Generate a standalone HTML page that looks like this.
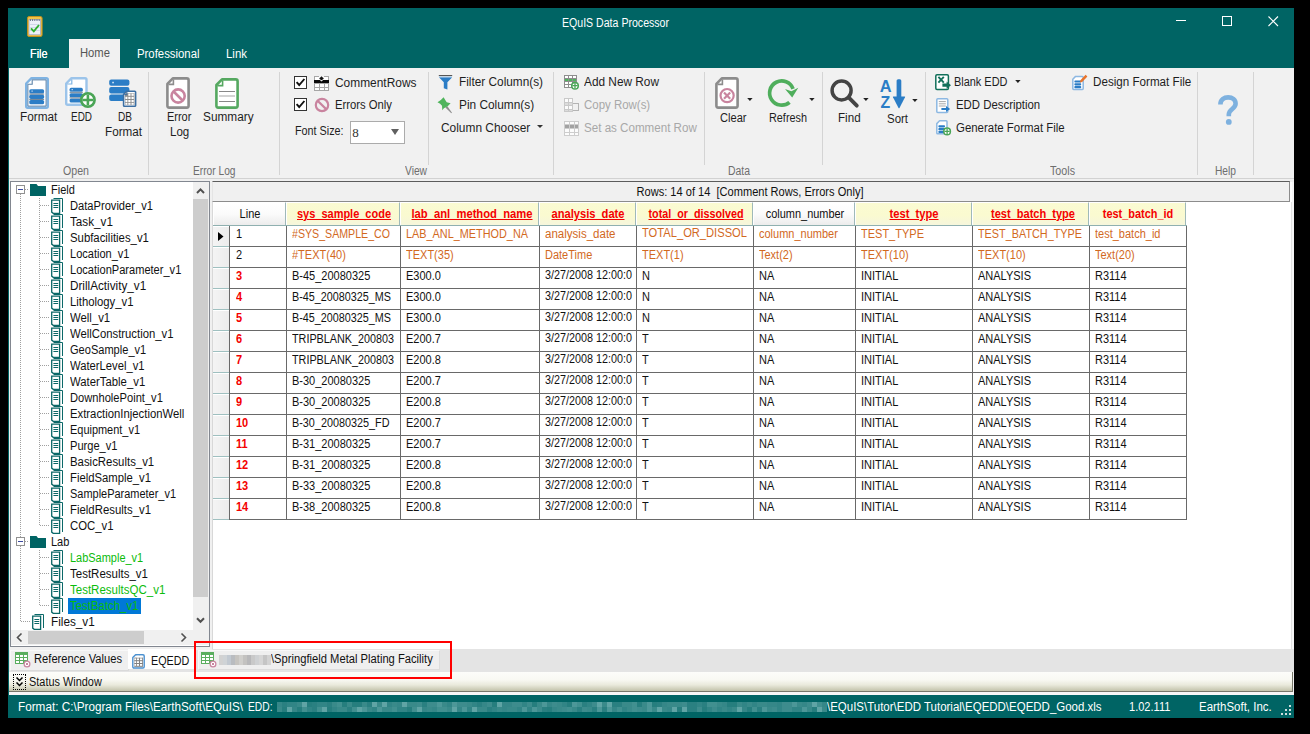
<!DOCTYPE html><html><head><meta charset="utf-8"><title>EQuIS Data Processor</title><style>
html,body{margin:0;padding:0;background:#000;}
body{width:1310px;height:734px;position:relative;overflow:hidden;font-family:"Liberation Sans",sans-serif;}
.a{position:absolute;}
.t{position:absolute;white-space:pre;line-height:1;font-family:"Liberation Sans",sans-serif;}
svg{position:absolute;overflow:visible;}
.vs{position:absolute;width:1px;background:#d4d4d4;}
.gl{position:absolute;background:#696969;}
.rh{position:absolute;left:213px;width:16px;height:20px;background:linear-gradient(90deg,#f4f4f4,#ececec);border-top:1px solid #fff;box-sizing:border-box;}

</style></head><body>
<div class="a" style="left:8px;top:8px;width:1286px;height:710px;background:#006464;"></div>
<div class="a" style="left:9px;top:68px;width:1285px;height:110px;background:#f1f1f1;"></div>
<div class="a" style="left:9px;top:178px;width:1285px;height:1px;background:#d2d2d2;"></div>
<div class="a" style="left:9px;top:179px;width:1285px;height:516px;background:#f0f0f0;"></div>
<div class="a" style="left:69px;top:39px;width:51px;height:29px;background:#f1f1f1;"></div>
<span class="t" style="left:562px;top:17.18px;font-size:12px;color:#ffffff;transform:scaleX(0.8815);transform-origin:0 50%;">EQuIS Data Processor</span>
<svg style="left:1170px;top:10px" width="120" height="24" viewBox="0 0 120 24"><g stroke="#fff" stroke-width="1" fill="none" shape-rendering="crispEdges"><path d="M6 10.5h10"/><rect x="52.5" y="6.5" width="9" height="9"/></g><path d="M98.5 6.5l9.5 9.5M108 6.5l-9.5 9.5" stroke="#fff" stroke-width="1.1" fill="none"/></svg>
<svg style="left:27.3px;top:15.8px" width="16" height="22" viewBox="0 0 16 22"><rect x="0.5" y="0.5" width="14.6" height="20" rx="1.6" fill="#f0c348" stroke="#c08f1e"/><rect x="2" y="3.6" width="11.6" height="15.2" fill="#edf0f8" stroke="#8e9bc0" stroke-width="0.6"/><path d="M3.4 3.2V5M5.6 3.2V5M7.8 3.2V5M10 3.2V5M12.2 3.2V5" stroke="#55607a" stroke-width="0.9"/><path d="M3 8.5h9.6M3 11.5h9.6M3 14.5h9.6" stroke="#c9d0e6" stroke-width="0.8"/><path d="M4 12.4l2.8 3 5.2-6.4" stroke="#2fb02f" stroke-width="1.9" fill="none"/></svg>
<span class="t" style="left:29.5px;top:47.68px;font-size:12px;color:#ffffff;transform:scaleX(0.9047);transform-origin:0 50%;text-shadow:0 0 0.4px #fff;">File</span>
<span class="t" style="left:80px;top:47.28px;font-size:12px;color:#555555;transform:scaleX(0.9370);transform-origin:0 50%;">Home</span>
<span class="t" style="left:136.5px;top:47.68px;font-size:12px;color:#ffffff;transform:scaleX(0.9463);transform-origin:0 50%;">Professional</span>
<span class="t" style="left:225.5px;top:47.68px;font-size:12px;color:#ffffff;transform:scaleX(0.9539);transform-origin:0 50%;">Link</span>
<div class="vs" style="left:428px;top:72px;height:93px;"></div>
<div class="vs" style="left:704px;top:72px;height:93px;"></div>
<div class="vs" style="left:822px;top:72px;height:93px;"></div>
<div class="vs" style="left:148px;top:72px;height:103px;"></div>
<div class="vs" style="left:279px;top:72px;height:103px;"></div>
<div class="vs" style="left:553px;top:72px;height:103px;"></div>
<div class="vs" style="left:925px;top:72px;height:103px;"></div>
<div class="vs" style="left:1197px;top:72px;height:103px;"></div>
<div class="vs" style="left:1253px;top:72px;height:103px;"></div>
<span class="t" style="left:63px;top:165.18px;font-size:12px;color:#6e6e6e;transform:scaleX(0.8856);transform-origin:0 50%;">Open</span>
<span class="t" style="left:193px;top:165.18px;font-size:12px;color:#6e6e6e;transform:scaleX(0.8495);transform-origin:0 50%;">Error Log</span>
<span class="t" style="left:404.9px;top:165.18px;font-size:12px;color:#6e6e6e;transform:scaleX(0.8528);transform-origin:0 50%;">View</span>
<span class="t" style="left:728.4px;top:165.18px;font-size:12px;color:#6e6e6e;transform:scaleX(0.8675);transform-origin:0 50%;">Data</span>
<span class="t" style="left:1049.7px;top:165.18px;font-size:12px;color:#6e6e6e;transform:scaleX(0.8924);transform-origin:0 50%;">Tools</span>
<span class="t" style="left:1215px;top:165.18px;font-size:12px;color:#6e6e6e;transform:scaleX(0.8506);transform-origin:0 50%;">Help</span>
<svg style="left:25px;top:77px" width="24" height="32" viewBox="0 0 24 32">
<path d="M6.5 1.2H21.3Q22.8 1.2 22.8 2.7V29.3Q22.8 30.8 21.3 30.8H2.7Q1.2 30.8 1.2 29.3V6.5Z" fill="#fff" stroke="#7fb3e2" stroke-width="2.4" stroke-linejoin="round"/>
<path d="M7.2 2.6V7.2H2.6" fill="none" stroke="#5c82a8" stroke-width="1.1"/>
<path d="M2.9 7.4V29.1H21.1V2.9H7.4" fill="none" stroke="#5c82a8" stroke-width="1"/>
<rect x="4.3" y="12.2" width="14.8" height="4.3" rx="1.6" fill="#2b7dc6"/><rect x="4.3" y="17.6" width="14.8" height="4.3" rx="1.6" fill="#2b7dc6"/><rect x="4.3" y="23" width="14.8" height="4.3" rx="1.6" fill="#2b7dc6"/>
<rect x="4.3" y="16.5" width="14.8" height="1.1" fill="#7a8a9a"/><rect x="4.3" y="21.9" width="14.8" height="1.1" fill="#7a8a9a"/>
<rect x="6.5" y="13.5" width="1.2" height="1.2" fill="#cfe3f5"/>
</svg>
<span class="t" style="left:20.3px;top:110.78px;font-size:12px;color:#1e1e1e;transform:scaleX(0.9838);transform-origin:0 50%;">Format</span>
<svg style="left:65px;top:77px" width="32" height="32" viewBox="0 0 32 32">
<path d="M6.5 1.2H20Q21.5 1.2 21.5 2.7V26.2Q21.5 27.7 20 27.7H2.7Q1.2 27.7 1.2 26.2V6.5Z" fill="#fff" stroke="#9cc4ea" stroke-width="2.4" stroke-linejoin="round"/>
<path d="M6.8 2.5V7H2.3" fill="none" stroke="#7fb3e2" stroke-width="1.2"/>
<rect x="4.6" y="10.8" width="13.2" height="4" rx="1.5" fill="#2b7dc6"/><rect x="4.6" y="16.2" width="13.2" height="4" rx="1.5" fill="#2b7dc6"/><rect x="4.6" y="21.5" width="13.2" height="4" rx="1.5" fill="#2b7dc6"/>
<rect x="4.6" y="14.8" width="13.2" height="1.4" fill="#8a99a8"/><rect x="4.6" y="20.2" width="13.2" height="1.3" fill="#8a99a8"/>
<rect x="6.6" y="12" width="1.2" height="1.2" fill="#cfe3f5"/>
<circle cx="22.9" cy="23" r="6.7" fill="#fff" stroke="#4aa556" stroke-width="2.6"/>
<path d="M22.9 17.5V28.5M17.4 23H28.4" stroke="#4aa556" stroke-width="2.6"/>
</svg>
<span class="t" style="left:71.2px;top:110.78px;font-size:12px;color:#1e1e1e;transform:scaleX(0.8286);transform-origin:0 50%;">EDD</span>
<svg style="left:109px;top:79px" width="28" height="29" viewBox="0 0 28 29">
<rect x="0.2" y="0.4" width="20.2" height="6.4" rx="2" fill="#2b7dc6"/><rect x="0.2" y="8" width="20.2" height="6.4" rx="2" fill="#2b7dc6"/><rect x="0.2" y="15.6" width="20.2" height="6.4" rx="2" fill="#2b7dc6"/>
<rect x="3.3" y="2.8" width="1.5" height="1.5" fill="#e4f0fb"/>
<path d="M17.8 12.2H25.8Q26.6 12.2 26.6 13V26.5Q26.6 27.3 25.8 27.3H15.4Q14.6 27.3 14.6 26.5V15.4Z" fill="#fff" stroke="#3c6fa3" stroke-width="1.6" stroke-linejoin="round"/>
<rect x="16" y="14.2" width="9.4" height="11.8" fill="#8f8f8f"/>
<g fill="#fff"><rect x="19.3" y="14.6" width="2.2" height="2.2"/><rect x="22.5" y="14.6" width="2.2" height="2.2"/><rect x="16.4" y="17.8" width="2" height="2.2"/><rect x="19.3" y="17.8" width="2.2" height="2.2"/><rect x="22.5" y="17.8" width="2.2" height="2.2"/><rect x="16.4" y="21" width="2" height="2.2"/><rect x="19.3" y="21" width="2.2" height="2.2"/><rect x="22.5" y="21" width="2.2" height="2.2"/><rect x="16.4" y="24" width="2" height="1.8"/><rect x="19.3" y="24" width="2.2" height="1.8"/><rect x="22.5" y="24" width="2.2" height="1.8"/></g>
<path d="M17.9 13V15.6H15.3" fill="none" stroke="#3c6fa3" stroke-width="1"/>
</svg>
<span class="t" style="left:117.5px;top:110.78px;font-size:12px;color:#1e1e1e;transform:scaleX(0.8397);transform-origin:0 50%;">DB</span>
<span class="t" style="left:104.9px;top:125.58px;font-size:12px;color:#1e1e1e;transform:scaleX(0.9733);transform-origin:0 50%;">Format</span>
<svg style="left:166px;top:77px" width="24" height="32" viewBox="0 0 24 32">
<path d="M6.8 1.4H20.8Q22.6 1.4 22.6 3.2V28.8Q22.6 30.6 20.8 30.6H3.2Q1.4 30.6 1.4 28.8V6.8Z" fill="#fff" stroke="#8c8c8c" stroke-width="2.6" stroke-linejoin="round"/>
<path d="M7.4 2.5V7.4H2.5" fill="none" stroke="#8c8c8c" stroke-width="1.6"/>
<circle cx="12.1" cy="19" r="6.6" fill="#fff" stroke="#c9849f" stroke-width="2.6"/>
<path d="M7.6 14.5L16.6 23.5" stroke="#c9849f" stroke-width="2.6"/>
</svg>
<span class="t" style="left:166.5px;top:110.78px;font-size:12px;color:#1e1e1e;transform:scaleX(0.9111);transform-origin:0 50%;">Error</span>
<span class="t" style="left:170.4px;top:125.58px;font-size:12px;color:#1e1e1e;transform:scaleX(0.9635);transform-origin:0 50%;">Log</span>
<svg style="left:215px;top:78px" width="24" height="31" viewBox="0 0 24 31">
<path d="M7 1.4H20.8Q22.6 1.4 22.6 3.2V27.8Q22.6 29.6 20.8 29.6H3.2Q1.4 29.6 1.4 27.8V7Z" fill="#fff" stroke="#55a860" stroke-width="2.6" stroke-linejoin="round"/>
<path d="M7.6 2.5V7.6H2.5" fill="none" stroke="#55a860" stroke-width="1.6"/>
<path d="M4 13.5H20" stroke="#7a7a7a" stroke-width="0.9"/><path d="M4 18H20" stroke="#c8c8c8" stroke-width="1.6"/><path d="M4 23.5H20" stroke="#7a7a7a" stroke-width="0.9"/>
</svg>
<span class="t" style="left:203.1px;top:110.78px;font-size:12px;color:#1e1e1e;transform:scaleX(0.9855);transform-origin:0 50%;">Summary</span>
<div class="a" style="left:294px;top:76px;width:11px;height:11px;border:1px solid #333;background:#fff;"></div>
<svg style="left:294px;top:76px" width="13" height="13" viewBox="0 0 13 13"><path d="M2.6 6.2L5.2 9L10.4 3" fill="none" stroke="#111" stroke-width="1.9"/></svg>
<div class="a" style="left:294px;top:98px;width:11px;height:11px;border:1px solid #333;background:#fff;"></div>
<svg style="left:294px;top:98px" width="13" height="13" viewBox="0 0 13 13"><path d="M2.6 6.2L5.2 9L10.4 3" fill="none" stroke="#111" stroke-width="1.9"/></svg>
<svg style="left:314px;top:76px" width="15" height="15" viewBox="0 0 15 15"><g shape-rendering="crispEdges"><rect x="0" y="0" width="15" height="15" fill="#a6a6a6"/>
<rect x="1" y="1" width="4" height="3" fill="#fff"/><rect x="10" y="1" width="4" height="3" fill="#fff"/><rect x="5" y="0" width="5" height="4" fill="#f6f6f6"/>
<rect x="0" y="4" width="15" height="3" fill="#0a0a0a"/>
<rect x="1" y="8" width="4" height="3" fill="#fff"/><rect x="6" y="8" width="4" height="3" fill="#fff"/><rect x="11" y="8" width="3" height="3" fill="#fff"/>
<rect x="1" y="12" width="4" height="2" fill="#fff"/><rect x="6" y="12" width="4" height="2" fill="#fff"/><rect x="11" y="12" width="3" height="2" fill="#fff"/></g>
<path d="M7.5 0.2L9.8 2.4L7.5 4.6L5.2 2.4Z" fill="#111"/><path d="M5.8 4L7.5 5.6L9.2 4Z" fill="#e8e8e8"/></svg>
<span class="t" style="left:334.5px;top:77.18px;font-size:12px;color:#1e1e1e;transform:scaleX(0.9935);transform-origin:0 50%;">CommentRows</span>
<svg style="left:313.5px;top:97.3px" width="16" height="16" viewBox="0 0 16 16"><circle cx="8" cy="8" r="6.2" fill="none" stroke="#c9849f" stroke-width="2.2"/><path d="M3.6 3.8L12.4 12.4" stroke="#c9849f" stroke-width="2.2"/></svg>
<span class="t" style="left:334.5px;top:99.18px;font-size:12px;color:#1e1e1e;transform:scaleX(0.9392);transform-origin:0 50%;">Errors Only</span>
<span class="t" style="left:295.4px;top:125.18px;font-size:12px;color:#1e1e1e;transform:scaleX(0.8995);transform-origin:0 50%;">Font Size:</span>
<div class="a" style="left:350px;top:121px;width:53px;height:21px;border:1px solid #ababab;background:#fff;"></div>
<span class="t" style="left:352.3px;top:126.18px;font-size:12px;color:#333;font-family:'Liberation Serif',serif;font-size:13px;">8</span>
<svg style="left:390px;top:128px" width="10" height="8" viewBox="0 0 10 8"><path d="M1 1H9L5 7Z" fill="#606060"/></svg>
<svg style="left:438px;top:74px" width="15" height="16" viewBox="0 0 15 16"><rect x="0.8" y="1" width="13.4" height="1.1" fill="#555"/><rect x="1" y="2.6" width="13" height="1" fill="#9cc6ea"/><path d="M1.2 3.5H14L9.4 8.3V15.5L5.8 14.2V8.3Z" fill="#2b7dc6"/></svg>
<span class="t" style="left:458.5px;top:76.28px;font-size:12px;color:#1e1e1e;transform:scaleX(0.9843);transform-origin:0 50%;">Filter Column(s)</span>
<svg style="left:437px;top:97px" width="17" height="17" viewBox="0 0 17 17"><path d="M8.4 10.6L10.4 9.2L15 15.8L14.3 16.2Z" fill="#8e8e8e"/><path d="M6.6 0.2L8.1 2.7L9.7 5.2L13.6 6.2L10.7 9.3L6.9 11.2L5.3 13.2L5 8.7L3.1 6.8L0.5 5.2L3.8 3Z" fill="#4fb45c"/></svg>
<span class="t" style="left:458.5px;top:99.18px;font-size:12px;color:#1e1e1e;transform:scaleX(0.9891);transform-origin:0 50%;">Pin Column(s)</span>
<span class="t" style="left:440.7px;top:121.78px;font-size:12px;color:#1e1e1e;transform:scaleX(0.9917);transform-origin:0 50%;">Column Chooser</span>
<svg style="left:536.8px;top:125px" width="6" height="3" viewBox="0 0 6 3"><path d="M0 0H6L3 3Z" fill="#333"/></svg>
<svg style="left:564px;top:75px" width="19" height="17" viewBox="0 0 19 17"><g shape-rendering="crispEdges"><rect x="0" y="0" width="13" height="13" fill="#8e8e8e"/><rect x="1" y="1" width="3" height="2" fill="#fff"/><rect x="5" y="1" width="3" height="2" fill="#fff"/><rect x="9" y="1" width="3" height="2" fill="#fff"/><rect x="1" y="4" width="3" height="2" fill="#4fb45c"/><rect x="5" y="4" width="3" height="2" fill="#4fb45c"/><rect x="9" y="4" width="3" height="2" fill="#4fb45c"/><rect x="1" y="7" width="3" height="2" fill="#fff"/><rect x="5" y="7" width="3" height="2" fill="#fff"/><rect x="9" y="7" width="3" height="2" fill="#fff"/><rect x="1" y="10" width="3" height="2" fill="#fff"/><rect x="5" y="10" width="3" height="2" fill="#fff"/><rect x="9" y="10" width="3" height="2" fill="#fff"/></g><circle cx="11" cy="10.7" r="3.3" fill="#fff" stroke="#4aa556" stroke-width="1.5"/><path d="M11 8V13.4M8.3 10.7H13.7" stroke="#4aa556" stroke-width="1.3"/></svg>
<span class="t" style="left:584.2px;top:76.28px;font-size:12px;color:#1e1e1e;transform:scaleX(0.9864);transform-origin:0 50%;">Add New Row</span>
<svg style="left:564px;top:98px" width="15" height="18" viewBox="0 0 15 18"><g shape-rendering="crispEdges"><rect x="0" y="0" width="9" height="14" fill="#c9c9c9"/><rect x="1" y="1" width="3" height="3" fill="#fcfcfc"/><rect x="5" y="1" width="3" height="3" fill="#fcfcfc"/><rect x="1" y="5" width="3" height="2" fill="#dcdcdc"/><rect x="5" y="5" width="3" height="2" fill="#dcdcdc"/><rect x="1" y="8" width="3" height="3" fill="#fcfcfc"/><rect x="5" y="8" width="3" height="3" fill="#fcfcfc"/><rect x="1" y="12" width="3" height="1" fill="#dcdcdc"/><rect x="5" y="12" width="3" height="1" fill="#dcdcdc"/></g><path d="M9 5.5H14.5V12.5H9" fill="none" stroke="#b4b4b4" stroke-width="1" shape-rendering="crispEdges"/></svg>
<span class="t" style="left:584.2px;top:99.18px;font-size:12px;color:#a8a8a8;transform:scaleX(0.9544);transform-origin:0 50%;">Copy Row(s)</span>
<svg style="left:564px;top:121px" width="21" height="19" viewBox="0 0 21 19"><g shape-rendering="crispEdges"><rect x="0" y="0" width="15" height="15" fill="#cdcdcd"/><rect x="1" y="1" width="4" height="2" fill="#fcfcfc"/><rect x="6" y="1" width="4" height="2" fill="#fcfcfc"/><rect x="11" y="1" width="3" height="2" fill="#fcfcfc"/><rect x="1" y="4" width="4" height="3" fill="#a2a2a2"/><rect x="6" y="4" width="4" height="3" fill="#a2a2a2"/><rect x="11" y="4" width="3" height="3" fill="#a2a2a2"/><rect x="1" y="8" width="4" height="3" fill="#fcfcfc"/><rect x="6" y="8" width="4" height="3" fill="#fcfcfc"/><rect x="11" y="8" width="3" height="3" fill="#fcfcfc"/><rect x="1" y="12" width="4" height="2" fill="#fcfcfc"/><rect x="6" y="12" width="4" height="2" fill="#fcfcfc"/><rect x="11" y="12" width="3" height="2" fill="#fcfcfc"/></g></svg>
<span class="t" style="left:584.2px;top:121.78px;font-size:12px;color:#a8a8a8;transform:scaleX(0.9664);transform-origin:0 50%;">Set as Comment Row</span>
<svg style="left:715px;top:77px" width="24" height="32" viewBox="0 0 24 32">
<path d="M6.8 1.4H20.8Q22.6 1.4 22.6 3.2V28.8Q22.6 30.6 20.8 30.6H3.2Q1.4 30.6 1.4 28.8V6.8Z" fill="#fff" stroke="#8c8c8c" stroke-width="2.6" stroke-linejoin="round"/>
<path d="M7.4 2.5V7.4H2.5" fill="none" stroke="#8c8c8c" stroke-width="1.6"/>
<circle cx="12.1" cy="18.6" r="6.6" fill="#fff" stroke="#c9849f" stroke-width="2.2"/>
<path d="M9 15.5L15.2 21.7M15.2 15.5L9 21.7" stroke="#c9849f" stroke-width="2.2"/>
</svg>
<svg style="left:746.8px;top:98px" width="6" height="3" viewBox="0 0 6 3"><path d="M0.2 0H5.6L2.9 3Z" fill="#222"/></svg>
<span class="t" style="left:719.5px;top:112.18px;font-size:12px;color:#1e1e1e;transform:scaleX(0.9237);transform-origin:0 50%;">Clear</span>
<svg style="left:767px;top:78px" width="32" height="30" viewBox="0 0 32 30">
<path d="M26.07 10.86A12.1 12.1 0 1 0 22.5 24.3" fill="none" stroke="#4fae5c" stroke-width="3.7"/>
<path d="M18 11L24.4 13.2L31.3 9.8L25.2 19.4Z" fill="#4fae5c"/>
</svg>
<svg style="left:808.8px;top:98px" width="6" height="3" viewBox="0 0 6 3"><path d="M0.2 0H5.6L2.9 3Z" fill="#222"/></svg>
<span class="t" style="left:768.6px;top:112.18px;font-size:12px;color:#1e1e1e;transform:scaleX(0.9041);transform-origin:0 50%;">Refresh</span>
<svg style="left:829px;top:78px" width="31" height="31" viewBox="0 0 31 31">
<circle cx="12.6" cy="12.4" r="9.5" fill="none" stroke="#444" stroke-width="3.5"/><path d="M19.6 19.4L27.8 27.7" stroke="#444" stroke-width="3.8" stroke-linecap="round"/>
</svg>
<svg style="left:862.8px;top:98px" width="6" height="3" viewBox="0 0 6 3"><path d="M0.2 0H5.6L2.9 3Z" fill="#222"/></svg>
<span class="t" style="left:838px;top:112.18px;font-size:12px;color:#1e1e1e;transform:scaleX(0.9681);transform-origin:0 50%;">Find</span>
<svg style="left:879px;top:79px" width="27" height="30" viewBox="0 0 27 30">
<text x="0.8" y="12.7" font-family="Liberation Sans" font-weight="bold" font-size="16.4" fill="#2b7dc6">A</text>
<text x="1.6" y="28.8" font-family="Liberation Sans" font-weight="bold" font-size="15.8" fill="#2b7dc6">Z</text>
<rect x="17.6" y="0.3" width="4.7" height="20" rx="1.5" fill="#2b7dc6"/><path d="M14.4 17.4H25.6Q26.4 17.4 26 18.2L20.6 28.8Q20 29.8 19.4 28.8L14 18.2Q13.6 17.4 14.4 17.4Z" fill="#2b7dc6"/>
</svg>
<svg style="left:911.9px;top:98.6px" width="6" height="3" viewBox="0 0 6 3"><path d="M0.2 0H5.6L2.9 3Z" fill="#222"/></svg>
<span class="t" style="left:886.9px;top:112.78px;font-size:12px;color:#1e1e1e;transform:scaleX(0.9539);transform-origin:0 50%;">Sort</span>
<svg style="left:935px;top:74px" width="16" height="17" viewBox="0 0 16 17">
<rect x="0.8" y="0.8" width="12.6" height="14.6" rx="1.2" fill="#fff" stroke="#12705a" stroke-width="1.5"/>
<path d="M3.4 2.8L8.8 8.6M8.8 2.8L3.4 8.6" stroke="#12705a" stroke-width="1.9"/>
<path d="M7.4 9.6H11.6V7.6L16 11.2L11.6 14.8V12.8H7.4Z" fill="#12705a"/>
</svg>
<span class="t" style="left:954.2px;top:76.28px;font-size:12px;color:#1e1e1e;transform:scaleX(0.9099);transform-origin:0 50%;">Blank EDD</span>
<svg style="left:1014.6px;top:80px" width="6" height="3" viewBox="0 0 6 3"><path d="M0.2 0H5.6L2.9 3Z" fill="#222"/></svg>
<svg style="left:936px;top:97.8px" width="15" height="16" viewBox="0 0 15 16">
<rect x="0.8" y="0.8" width="11" height="13.6" rx="1" fill="#fff" stroke="#8db8e2" stroke-width="1.5"/>
<path d="M2.8 3.6H9.8M2.8 5.8H9.8M2.8 8H9.8" stroke="#a9a9a9" stroke-width="1"/>
<path d="M5.4 10H10V8L14.2 11L10 14V12H5.4Z" fill="#2b7dc6"/>
</svg>
<span class="t" style="left:956.3px;top:99.18px;font-size:12px;color:#1e1e1e;transform:scaleX(0.9492);transform-origin:0 50%;">EDD Description</span>
<svg style="left:936px;top:120px" width="16" height="16" viewBox="0 0 16 16">
<path d="M3.6 0.8H10.2Q11 0.8 11 1.6V13Q11 13.8 10.2 13.8H1.6Q0.8 13.8 0.8 13V3.6Z" fill="#fff" stroke="#8db8e2" stroke-width="1.5" stroke-linejoin="round"/>
<rect x="2.4" y="5.2" width="6.6" height="2.2" rx="0.8" fill="#2b7dc6"/><rect x="2.4" y="8" width="6.6" height="2.2" rx="0.8" fill="#2b7dc6"/><rect x="2.4" y="10.8" width="6.6" height="2.2" rx="0.8" fill="#2b7dc6"/>
<circle cx="11.1" cy="11.4" r="3.3" fill="#fff" stroke="#4aa556" stroke-width="1.5"/><path d="M11.1 8.8V14M8.5 11.4H13.7" stroke="#4aa556" stroke-width="1.3"/>
</svg>
<span class="t" style="left:956.3px;top:121.78px;font-size:12px;color:#1e1e1e;transform:scaleX(0.9531);transform-origin:0 50%;">Generate Format File</span>
<svg style="left:1072px;top:74px" width="16" height="17" viewBox="0 0 16 17">
<path d="M3.6 2.4H10.4Q11.2 2.4 11.2 3.2V14.6Q11.2 15.4 10.4 15.4H1.6Q0.8 15.4 0.8 14.6V5.2Z" fill="#fff" stroke="#8db8e2" stroke-width="1.5" stroke-linejoin="round"/>
<rect x="2.4" y="6.4" width="6.8" height="2.2" rx="0.8" fill="#2b7dc6"/><rect x="2.4" y="9.2" width="6.8" height="2.2" rx="0.8" fill="#2b7dc6"/><rect x="2.4" y="12" width="6.8" height="2.2" rx="0.8" fill="#2b7dc6"/>
<path d="M8.4 6.2L13.6 0.8L15.4 2.6L10.2 8L8 8.6Z" fill="#e8742c"/>
</svg>
<span class="t" style="left:1093px;top:76.28px;font-size:12px;color:#1e1e1e;transform:scaleX(0.9697);transform-origin:0 50%;">Design Format File</span>
<svg style="left:1217px;top:94px" width="22" height="32" viewBox="0 0 22 32">
<path d="M3.4 10.4C3.4 5.2 7 3.4 11.2 3.4C15.4 3.4 18.6 5.6 18.6 9.8C18.6 14.6 11.8 15.4 11.8 20.4V22.2" fill="none" stroke="#7eb1df" stroke-width="4.6"/>
<circle cx="11.8" cy="27.9" r="2.9" fill="#7eb1df"/>
</svg>
<div class="a" style="left:10px;top:181px;width:198px;height:464px;border:1px solid #828790;background:#fff;box-sizing:content-box;"></div>
<div class="a" style="left:193px;top:182px;width:16px;height:448px;background:#f0f0f0;"></div>
<div class="a" style="left:193px;top:199px;width:15px;height:398px;background:#cdcdcd;"></div>
<svg style="left:195px;top:186px" width="11" height="9" viewBox="0 0 11 9"><path d="M2 7L5.5 3.4L9 7" fill="none" stroke="#505050" stroke-width="2"/></svg>
<svg style="left:195px;top:616px" width="11" height="9" viewBox="0 0 11 9"><path d="M2 2.2L5.5 5.8L9 2.2" fill="none" stroke="#505050" stroke-width="2"/></svg>
<div class="a" style="left:11px;top:630px;width:181px;height:15px;background:#f0f0f0;"></div>
<div class="a" style="left:192px;top:630px;width:17px;height:15px;background:#f0f0f0;"></div>
<div class="a" style="left:28px;top:631px;width:116px;height:13px;background:#cdcdcd;"></div>
<svg style="left:15px;top:632px" width="8" height="11" viewBox="0 0 8 11"><path d="M6.5 1.5L2.5 5.5L6.5 9.5" fill="none" stroke="#505050" stroke-width="1.6"/></svg>
<svg style="left:180px;top:632px" width="8" height="11" viewBox="0 0 8 11"><path d="M1.5 1.5L5.5 5.5L1.5 9.5" fill="none" stroke="#505050" stroke-width="1.6"/></svg>
<div class="a" style="left:20px;top:194px;width:1px;height:428px;background:repeating-linear-gradient(180deg,#a0a0a0 0 1px,transparent 1px 2px);"></div>
<div class="a" style="left:25px;top:189px;width:4px;height:1px;background:repeating-linear-gradient(90deg,#a0a0a0 0 1px,transparent 1px 2px);"></div>
<div class="a" style="left:25px;top:541px;width:4px;height:1px;background:repeating-linear-gradient(90deg,#a0a0a0 0 1px,transparent 1px 2px);"></div>
<div class="a" style="left:21px;top:621px;width:9px;height:1px;background:repeating-linear-gradient(90deg,#a0a0a0 0 1px,transparent 1px 2px);"></div>
<div class="a" style="left:16px;top:185px;width:7px;height:7px;border:1px solid #919191;background:#fff;"></div><div class="a" style="left:18px;top:189px;width:5px;height:1px;background:#3c4aa0;"></div>
<svg style="left:30px;top:184px" width="16" height="12" viewBox="0 0 16 12"><path d="M0 0H6.5L8 2H16V12H0Z" fill="#006464"/></svg>
<span class="t" style="left:50.6px;top:184.18px;font-size:12px;color:#111111;transform:scaleX(0.9167);transform-origin:0 50%;">Field</span>
<div class="a" style="left:39px;top:198px;width:1px;height:328px;background:repeating-linear-gradient(180deg,#a0a0a0 0 1px,transparent 1px 2px);"></div>
<div class="a" style="left:40px;top:205px;width:10px;height:1px;background:repeating-linear-gradient(90deg,#a0a0a0 0 1px,transparent 1px 2px);"></div>
<svg style="left:51px;top:198px" width="12" height="16" viewBox="0 0 12 16"><path d="M2.5 0.5H11.5V14" fill="none" stroke="#0b6868" stroke-width="1"/><path d="M0.7 2.2H8.6V15.3H2.2L0.7 14.1Z" fill="#fff" stroke="#0b6868" stroke-width="1.3"/><path d="M2.4 5.5H7.2M2.4 7.5H7.2M2.4 9.5H7.2" stroke="#0b6868" stroke-width="1.1"/></svg>
<span class="t" style="left:69.9px;top:200.18px;font-size:12px;color:#111111;transform:scaleX(0.9274);transform-origin:0 50%;">DataProvider_v1</span>
<div class="a" style="left:40px;top:221px;width:10px;height:1px;background:repeating-linear-gradient(90deg,#a0a0a0 0 1px,transparent 1px 2px);"></div>
<svg style="left:51px;top:214px" width="12" height="16" viewBox="0 0 12 16"><path d="M2.5 0.5H11.5V14" fill="none" stroke="#0b6868" stroke-width="1"/><path d="M0.7 2.2H8.6V15.3H2.2L0.7 14.1Z" fill="#fff" stroke="#0b6868" stroke-width="1.3"/><path d="M2.4 5.5H7.2M2.4 7.5H7.2M2.4 9.5H7.2" stroke="#0b6868" stroke-width="1.1"/></svg>
<span class="t" style="left:69.9px;top:216.18px;font-size:12px;color:#111111;transform:scaleX(0.9743);transform-origin:0 50%;">Task_v1</span>
<div class="a" style="left:40px;top:237px;width:10px;height:1px;background:repeating-linear-gradient(90deg,#a0a0a0 0 1px,transparent 1px 2px);"></div>
<svg style="left:51px;top:230px" width="12" height="16" viewBox="0 0 12 16"><path d="M2.5 0.5H11.5V14" fill="none" stroke="#0b6868" stroke-width="1"/><path d="M0.7 2.2H8.6V15.3H2.2L0.7 14.1Z" fill="#fff" stroke="#0b6868" stroke-width="1.3"/><path d="M2.4 5.5H7.2M2.4 7.5H7.2M2.4 9.5H7.2" stroke="#0b6868" stroke-width="1.1"/></svg>
<span class="t" style="left:69.9px;top:232.18px;font-size:12px;color:#111111;transform:scaleX(0.9461);transform-origin:0 50%;">Subfacilities_v1</span>
<div class="a" style="left:40px;top:253px;width:10px;height:1px;background:repeating-linear-gradient(90deg,#a0a0a0 0 1px,transparent 1px 2px);"></div>
<svg style="left:51px;top:246px" width="12" height="16" viewBox="0 0 12 16"><path d="M2.5 0.5H11.5V14" fill="none" stroke="#0b6868" stroke-width="1"/><path d="M0.7 2.2H8.6V15.3H2.2L0.7 14.1Z" fill="#fff" stroke="#0b6868" stroke-width="1.3"/><path d="M2.4 5.5H7.2M2.4 7.5H7.2M2.4 9.5H7.2" stroke="#0b6868" stroke-width="1.1"/></svg>
<span class="t" style="left:69.9px;top:248.18px;font-size:12px;color:#111111;transform:scaleX(0.9193);transform-origin:0 50%;">Location_v1</span>
<div class="a" style="left:40px;top:269px;width:10px;height:1px;background:repeating-linear-gradient(90deg,#a0a0a0 0 1px,transparent 1px 2px);"></div>
<svg style="left:51px;top:262px" width="12" height="16" viewBox="0 0 12 16"><path d="M2.5 0.5H11.5V14" fill="none" stroke="#0b6868" stroke-width="1"/><path d="M0.7 2.2H8.6V15.3H2.2L0.7 14.1Z" fill="#fff" stroke="#0b6868" stroke-width="1.3"/><path d="M2.4 5.5H7.2M2.4 7.5H7.2M2.4 9.5H7.2" stroke="#0b6868" stroke-width="1.1"/></svg>
<span class="t" style="left:69.9px;top:264.18px;font-size:12px;color:#111111;transform:scaleX(0.9217);transform-origin:0 50%;">LocationParameter_v1</span>
<div class="a" style="left:40px;top:285px;width:10px;height:1px;background:repeating-linear-gradient(90deg,#a0a0a0 0 1px,transparent 1px 2px);"></div>
<svg style="left:51px;top:278px" width="12" height="16" viewBox="0 0 12 16"><path d="M2.5 0.5H11.5V14" fill="none" stroke="#0b6868" stroke-width="1"/><path d="M0.7 2.2H8.6V15.3H2.2L0.7 14.1Z" fill="#fff" stroke="#0b6868" stroke-width="1.3"/><path d="M2.4 5.5H7.2M2.4 7.5H7.2M2.4 9.5H7.2" stroke="#0b6868" stroke-width="1.1"/></svg>
<span class="t" style="left:69.9px;top:280.18px;font-size:12px;color:#111111;transform:scaleX(0.9767);transform-origin:0 50%;">DrillActivity_v1</span>
<div class="a" style="left:40px;top:301px;width:10px;height:1px;background:repeating-linear-gradient(90deg,#a0a0a0 0 1px,transparent 1px 2px);"></div>
<svg style="left:51px;top:294px" width="12" height="16" viewBox="0 0 12 16"><path d="M2.5 0.5H11.5V14" fill="none" stroke="#0b6868" stroke-width="1"/><path d="M0.7 2.2H8.6V15.3H2.2L0.7 14.1Z" fill="#fff" stroke="#0b6868" stroke-width="1.3"/><path d="M2.4 5.5H7.2M2.4 7.5H7.2M2.4 9.5H7.2" stroke="#0b6868" stroke-width="1.1"/></svg>
<span class="t" style="left:69.9px;top:296.18px;font-size:12px;color:#111111;transform:scaleX(0.9422);transform-origin:0 50%;">Lithology_v1</span>
<div class="a" style="left:40px;top:317px;width:10px;height:1px;background:repeating-linear-gradient(90deg,#a0a0a0 0 1px,transparent 1px 2px);"></div>
<svg style="left:51px;top:310px" width="12" height="16" viewBox="0 0 12 16"><path d="M2.5 0.5H11.5V14" fill="none" stroke="#0b6868" stroke-width="1"/><path d="M0.7 2.2H8.6V15.3H2.2L0.7 14.1Z" fill="#fff" stroke="#0b6868" stroke-width="1.3"/><path d="M2.4 5.5H7.2M2.4 7.5H7.2M2.4 9.5H7.2" stroke="#0b6868" stroke-width="1.1"/></svg>
<span class="t" style="left:69.9px;top:312.18px;font-size:12px;color:#111111;transform:scaleX(0.9465);transform-origin:0 50%;">Well_v1</span>
<div class="a" style="left:40px;top:333px;width:10px;height:1px;background:repeating-linear-gradient(90deg,#a0a0a0 0 1px,transparent 1px 2px);"></div>
<svg style="left:51px;top:326px" width="12" height="16" viewBox="0 0 12 16"><path d="M2.5 0.5H11.5V14" fill="none" stroke="#0b6868" stroke-width="1"/><path d="M0.7 2.2H8.6V15.3H2.2L0.7 14.1Z" fill="#fff" stroke="#0b6868" stroke-width="1.3"/><path d="M2.4 5.5H7.2M2.4 7.5H7.2M2.4 9.5H7.2" stroke="#0b6868" stroke-width="1.1"/></svg>
<span class="t" style="left:69.9px;top:328.18px;font-size:12px;color:#111111;transform:scaleX(0.9423);transform-origin:0 50%;">WellConstruction_v1</span>
<div class="a" style="left:40px;top:349px;width:10px;height:1px;background:repeating-linear-gradient(90deg,#a0a0a0 0 1px,transparent 1px 2px);"></div>
<svg style="left:51px;top:342px" width="12" height="16" viewBox="0 0 12 16"><path d="M2.5 0.5H11.5V14" fill="none" stroke="#0b6868" stroke-width="1"/><path d="M0.7 2.2H8.6V15.3H2.2L0.7 14.1Z" fill="#fff" stroke="#0b6868" stroke-width="1.3"/><path d="M2.4 5.5H7.2M2.4 7.5H7.2M2.4 9.5H7.2" stroke="#0b6868" stroke-width="1.1"/></svg>
<span class="t" style="left:69.9px;top:344.18px;font-size:12px;color:#111111;transform:scaleX(0.9212);transform-origin:0 50%;">GeoSample_v1</span>
<div class="a" style="left:40px;top:365px;width:10px;height:1px;background:repeating-linear-gradient(90deg,#a0a0a0 0 1px,transparent 1px 2px);"></div>
<svg style="left:51px;top:358px" width="12" height="16" viewBox="0 0 12 16"><path d="M2.5 0.5H11.5V14" fill="none" stroke="#0b6868" stroke-width="1"/><path d="M0.7 2.2H8.6V15.3H2.2L0.7 14.1Z" fill="#fff" stroke="#0b6868" stroke-width="1.3"/><path d="M2.4 5.5H7.2M2.4 7.5H7.2M2.4 9.5H7.2" stroke="#0b6868" stroke-width="1.1"/></svg>
<span class="t" style="left:69.9px;top:360.18px;font-size:12px;color:#111111;transform:scaleX(0.9360);transform-origin:0 50%;">WaterLevel_v1</span>
<div class="a" style="left:40px;top:381px;width:10px;height:1px;background:repeating-linear-gradient(90deg,#a0a0a0 0 1px,transparent 1px 2px);"></div>
<svg style="left:51px;top:374px" width="12" height="16" viewBox="0 0 12 16"><path d="M2.5 0.5H11.5V14" fill="none" stroke="#0b6868" stroke-width="1"/><path d="M0.7 2.2H8.6V15.3H2.2L0.7 14.1Z" fill="#fff" stroke="#0b6868" stroke-width="1.3"/><path d="M2.4 5.5H7.2M2.4 7.5H7.2M2.4 9.5H7.2" stroke="#0b6868" stroke-width="1.1"/></svg>
<span class="t" style="left:69.9px;top:376.18px;font-size:12px;color:#111111;transform:scaleX(0.9448);transform-origin:0 50%;">WaterTable_v1</span>
<div class="a" style="left:40px;top:397px;width:10px;height:1px;background:repeating-linear-gradient(90deg,#a0a0a0 0 1px,transparent 1px 2px);"></div>
<svg style="left:51px;top:390px" width="12" height="16" viewBox="0 0 12 16"><path d="M2.5 0.5H11.5V14" fill="none" stroke="#0b6868" stroke-width="1"/><path d="M0.7 2.2H8.6V15.3H2.2L0.7 14.1Z" fill="#fff" stroke="#0b6868" stroke-width="1.3"/><path d="M2.4 5.5H7.2M2.4 7.5H7.2M2.4 9.5H7.2" stroke="#0b6868" stroke-width="1.1"/></svg>
<span class="t" style="left:69.9px;top:392.18px;font-size:12px;color:#111111;transform:scaleX(0.9282);transform-origin:0 50%;">DownholePoint_v1</span>
<div class="a" style="left:40px;top:413px;width:10px;height:1px;background:repeating-linear-gradient(90deg,#a0a0a0 0 1px,transparent 1px 2px);"></div>
<svg style="left:51px;top:406px" width="12" height="16" viewBox="0 0 12 16"><path d="M2.5 0.5H11.5V14" fill="none" stroke="#0b6868" stroke-width="1"/><path d="M0.7 2.2H8.6V15.3H2.2L0.7 14.1Z" fill="#fff" stroke="#0b6868" stroke-width="1.3"/><path d="M2.4 5.5H7.2M2.4 7.5H7.2M2.4 9.5H7.2" stroke="#0b6868" stroke-width="1.1"/></svg>
<span class="t" style="left:69.9px;top:408.18px;font-size:12px;color:#111111;transform:scaleX(0.9433);transform-origin:0 50%;">ExtractionInjectionWell</span>
<div class="a" style="left:40px;top:429px;width:10px;height:1px;background:repeating-linear-gradient(90deg,#a0a0a0 0 1px,transparent 1px 2px);"></div>
<svg style="left:51px;top:422px" width="12" height="16" viewBox="0 0 12 16"><path d="M2.5 0.5H11.5V14" fill="none" stroke="#0b6868" stroke-width="1"/><path d="M0.7 2.2H8.6V15.3H2.2L0.7 14.1Z" fill="#fff" stroke="#0b6868" stroke-width="1.3"/><path d="M2.4 5.5H7.2M2.4 7.5H7.2M2.4 9.5H7.2" stroke="#0b6868" stroke-width="1.1"/></svg>
<span class="t" style="left:69.9px;top:424.18px;font-size:12px;color:#111111;transform:scaleX(0.9124);transform-origin:0 50%;">Equipment_v1</span>
<div class="a" style="left:40px;top:445px;width:10px;height:1px;background:repeating-linear-gradient(90deg,#a0a0a0 0 1px,transparent 1px 2px);"></div>
<svg style="left:51px;top:438px" width="12" height="16" viewBox="0 0 12 16"><path d="M2.5 0.5H11.5V14" fill="none" stroke="#0b6868" stroke-width="1"/><path d="M0.7 2.2H8.6V15.3H2.2L0.7 14.1Z" fill="#fff" stroke="#0b6868" stroke-width="1.3"/><path d="M2.4 5.5H7.2M2.4 7.5H7.2M2.4 9.5H7.2" stroke="#0b6868" stroke-width="1.1"/></svg>
<span class="t" style="left:69.9px;top:440.18px;font-size:12px;color:#111111;transform:scaleX(0.9245);transform-origin:0 50%;">Purge_v1</span>
<div class="a" style="left:40px;top:461px;width:10px;height:1px;background:repeating-linear-gradient(90deg,#a0a0a0 0 1px,transparent 1px 2px);"></div>
<svg style="left:51px;top:454px" width="12" height="16" viewBox="0 0 12 16"><path d="M2.5 0.5H11.5V14" fill="none" stroke="#0b6868" stroke-width="1"/><path d="M0.7 2.2H8.6V15.3H2.2L0.7 14.1Z" fill="#fff" stroke="#0b6868" stroke-width="1.3"/><path d="M2.4 5.5H7.2M2.4 7.5H7.2M2.4 9.5H7.2" stroke="#0b6868" stroke-width="1.1"/></svg>
<span class="t" style="left:69.9px;top:456.18px;font-size:12px;color:#111111;transform:scaleX(0.9490);transform-origin:0 50%;">BasicResults_v1</span>
<div class="a" style="left:40px;top:477px;width:10px;height:1px;background:repeating-linear-gradient(90deg,#a0a0a0 0 1px,transparent 1px 2px);"></div>
<svg style="left:51px;top:470px" width="12" height="16" viewBox="0 0 12 16"><path d="M2.5 0.5H11.5V14" fill="none" stroke="#0b6868" stroke-width="1"/><path d="M0.7 2.2H8.6V15.3H2.2L0.7 14.1Z" fill="#fff" stroke="#0b6868" stroke-width="1.3"/><path d="M2.4 5.5H7.2M2.4 7.5H7.2M2.4 9.5H7.2" stroke="#0b6868" stroke-width="1.1"/></svg>
<span class="t" style="left:69.9px;top:472.18px;font-size:12px;color:#111111;transform:scaleX(0.9413);transform-origin:0 50%;">FieldSample_v1</span>
<div class="a" style="left:40px;top:493px;width:10px;height:1px;background:repeating-linear-gradient(90deg,#a0a0a0 0 1px,transparent 1px 2px);"></div>
<svg style="left:51px;top:486px" width="12" height="16" viewBox="0 0 12 16"><path d="M2.5 0.5H11.5V14" fill="none" stroke="#0b6868" stroke-width="1"/><path d="M0.7 2.2H8.6V15.3H2.2L0.7 14.1Z" fill="#fff" stroke="#0b6868" stroke-width="1.3"/><path d="M2.4 5.5H7.2M2.4 7.5H7.2M2.4 9.5H7.2" stroke="#0b6868" stroke-width="1.1"/></svg>
<span class="t" style="left:69.9px;top:488.18px;font-size:12px;color:#111111;transform:scaleX(0.9133);transform-origin:0 50%;">SampleParameter_v1</span>
<div class="a" style="left:40px;top:509px;width:10px;height:1px;background:repeating-linear-gradient(90deg,#a0a0a0 0 1px,transparent 1px 2px);"></div>
<svg style="left:51px;top:502px" width="12" height="16" viewBox="0 0 12 16"><path d="M2.5 0.5H11.5V14" fill="none" stroke="#0b6868" stroke-width="1"/><path d="M0.7 2.2H8.6V15.3H2.2L0.7 14.1Z" fill="#fff" stroke="#0b6868" stroke-width="1.3"/><path d="M2.4 5.5H7.2M2.4 7.5H7.2M2.4 9.5H7.2" stroke="#0b6868" stroke-width="1.1"/></svg>
<span class="t" style="left:69.9px;top:504.18px;font-size:12px;color:#111111;transform:scaleX(0.9487);transform-origin:0 50%;">FieldResults_v1</span>
<div class="a" style="left:40px;top:525px;width:10px;height:1px;background:repeating-linear-gradient(90deg,#a0a0a0 0 1px,transparent 1px 2px);"></div>
<svg style="left:51px;top:518px" width="12" height="16" viewBox="0 0 12 16"><path d="M2.5 0.5H11.5V14" fill="none" stroke="#0b6868" stroke-width="1"/><path d="M0.7 2.2H8.6V15.3H2.2L0.7 14.1Z" fill="#fff" stroke="#0b6868" stroke-width="1.3"/><path d="M2.4 5.5H7.2M2.4 7.5H7.2M2.4 9.5H7.2" stroke="#0b6868" stroke-width="1.1"/></svg>
<span class="t" style="left:69.9px;top:520.18px;font-size:12px;color:#111111;transform:scaleX(0.9453);transform-origin:0 50%;">COC_v1</span>
<div class="a" style="left:16px;top:537px;width:7px;height:7px;border:1px solid #919191;background:#fff;"></div><div class="a" style="left:18px;top:541px;width:5px;height:1px;background:#3c4aa0;"></div>
<svg style="left:30px;top:536px" width="16" height="12" viewBox="0 0 16 12"><path d="M0 0H6.5L8 2H16V12H0Z" fill="#006464"/></svg>
<span class="t" style="left:50.6px;top:536.18px;font-size:12px;color:#111111;transform:scaleX(0.9167);transform-origin:0 50%;">Lab</span>
<div class="a" style="left:39px;top:550px;width:1px;height:56px;background:repeating-linear-gradient(180deg,#a0a0a0 0 1px,transparent 1px 2px);"></div>
<div class="a" style="left:40px;top:557px;width:10px;height:1px;background:repeating-linear-gradient(90deg,#a0a0a0 0 1px,transparent 1px 2px);"></div>
<svg style="left:51px;top:550px" width="12" height="16" viewBox="0 0 12 16"><path d="M2.5 0.5H11.5V14" fill="none" stroke="#0b6868" stroke-width="1"/><path d="M0.7 2.2H8.6V15.3H2.2L0.7 14.1Z" fill="#fff" stroke="#0b6868" stroke-width="1.3"/><path d="M2.4 5.5H7.2M2.4 7.5H7.2M2.4 9.5H7.2" stroke="#0b6868" stroke-width="1.1"/></svg>
<span class="t" style="left:69.9px;top:552.18px;font-size:12px;color:#0cbc0c;transform:scaleX(0.9143);transform-origin:0 50%;">LabSample_v1</span>
<div class="a" style="left:40px;top:573px;width:10px;height:1px;background:repeating-linear-gradient(90deg,#a0a0a0 0 1px,transparent 1px 2px);"></div>
<svg style="left:51px;top:566px" width="12" height="16" viewBox="0 0 12 16"><path d="M2.5 0.5H11.5V14" fill="none" stroke="#0b6868" stroke-width="1"/><path d="M0.7 2.2H8.6V15.3H2.2L0.7 14.1Z" fill="#fff" stroke="#0b6868" stroke-width="1.3"/><path d="M2.4 5.5H7.2M2.4 7.5H7.2M2.4 9.5H7.2" stroke="#0b6868" stroke-width="1.1"/></svg>
<span class="t" style="left:69.9px;top:568.18px;font-size:12px;color:#111;transform:scaleX(0.9585);transform-origin:0 50%;">TestResults_v1</span>
<div class="a" style="left:40px;top:589px;width:10px;height:1px;background:repeating-linear-gradient(90deg,#a0a0a0 0 1px,transparent 1px 2px);"></div>
<svg style="left:51px;top:582px" width="12" height="16" viewBox="0 0 12 16"><path d="M2.5 0.5H11.5V14" fill="none" stroke="#0b6868" stroke-width="1"/><path d="M0.7 2.2H8.6V15.3H2.2L0.7 14.1Z" fill="#fff" stroke="#0b6868" stroke-width="1.3"/><path d="M2.4 5.5H7.2M2.4 7.5H7.2M2.4 9.5H7.2" stroke="#0b6868" stroke-width="1.1"/></svg>
<span class="t" style="left:69.9px;top:584.18px;font-size:12px;color:#0cbc0c;transform:scaleX(0.9590);transform-origin:0 50%;">TestResultsQC_v1</span>
<div class="a" style="left:40px;top:605px;width:10px;height:1px;background:repeating-linear-gradient(90deg,#a0a0a0 0 1px,transparent 1px 2px);"></div>
<svg style="left:51px;top:598px" width="12" height="16" viewBox="0 0 12 16"><path d="M2.5 0.5H11.5V14" fill="none" stroke="#0b6868" stroke-width="1"/><path d="M0.7 2.2H8.6V15.3H2.2L0.7 14.1Z" fill="#fff" stroke="#0b6868" stroke-width="1.3"/><path d="M2.4 5.5H7.2M2.4 7.5H7.2M2.4 9.5H7.2" stroke="#0b6868" stroke-width="1.1"/></svg>
<div class="a" style="left:68px;top:598px;width:73px;height:16px;background:#0078d7;"></div>
<span class="t" style="left:69.9px;top:600.18px;font-size:12px;color:#0cbc0c;transform:scaleX(0.9507);transform-origin:0 50%;">TestBatch_v1</span>
<svg style="left:32px;top:614px" width="12" height="16" viewBox="0 0 12 16"><path d="M2.5 0.5H11.5V14" fill="none" stroke="#0b6868" stroke-width="1"/><path d="M0.7 2.2H8.6V15.3H2.2L0.7 14.1Z" fill="#fff" stroke="#0b6868" stroke-width="1.3"/><path d="M2.4 5.5H7.2M2.4 7.5H7.2M2.4 9.5H7.2" stroke="#0b6868" stroke-width="1.1"/></svg>
<span class="t" style="left:50.6px;top:616.18px;font-size:12px;color:#111111;transform:scaleX(0.9801);transform-origin:0 50%;">Files_v1</span>
<div class="a" style="left:213px;top:182px;width:1081px;height:467px;background:#fff;"></div>
<div class="a" style="left:1291px;top:202px;width:1px;height:447px;background:#e2e2e2;"></div>
<div class="a" style="left:1292px;top:182px;width:2px;height:467px;background:#f6f6f6;"></div>
<div class="a" style="left:212px;top:202px;width:1px;height:447px;background:#d8d8d8;"></div>
<div class="a" style="left:212px;top:181px;width:1076px;height:19px;background:#f0f0f0;border:1px solid #8c8c8c;border-top-color:#5c5c5c;border-left-color:#e4e4e4;"></div>
<span class="t" style="left:750.3px;top:185.58px;font-size:12px;color:#111;transform:translateX(-50%) scaleX(0.9224);transform-origin:50% 50%;">Rows: 14 of 14  [Comment Rows, Errors Only]</span>
<div class="a" style="left:213px;top:202px;width:73px;height:23px;background:linear-gradient(180deg,#ffffff 0%,#fbfbfb 50%,#ececec 100%);box-sizing:border-box;border-left:1px solid #fff;border-top:1px solid #fff;border-right:1px solid #9fb9b9;"></div>
<span class="t" style="left:250.0px;top:207.78px;font-size:12px;color:#111;transform:translateX(-50%) scaleX(0.9167);transform-origin:50% 50%;">Line</span>
<div class="a" style="left:286px;top:202px;width:114px;height:23px;background:linear-gradient(180deg,#fbfbd2 0%,#fafad0 55%,#f6f6dc 100%);box-sizing:border-box;border-left:1px solid #fff;border-top:1px solid #fff;border-right:1px solid #9fb9b9;"></div>
<span class="t" style="left:343.5px;top:207.78px;font-size:12px;color:#f40000;font-weight:bold;transform:translateX(-50%) scaleX(0.9149);transform-origin:50% 50%;text-decoration:underline;text-decoration-thickness:1px;text-underline-offset:1px;">sys_sample_code</span>
<div class="a" style="left:400px;top:202px;width:139px;height:23px;background:linear-gradient(180deg,#fbfbd2 0%,#fafad0 55%,#f6f6dc 100%);box-sizing:border-box;border-left:1px solid #fff;border-top:1px solid #fff;border-right:1px solid #9fb9b9;"></div>
<span class="t" style="left:471.5px;top:207.78px;font-size:12px;color:#f40000;font-weight:bold;transform:translateX(-50%) scaleX(0.9352);transform-origin:50% 50%;text-decoration:underline;text-decoration-thickness:1px;text-underline-offset:1px;">lab_anl_method_name</span>
<div class="a" style="left:539px;top:202px;width:97px;height:23px;background:linear-gradient(180deg,#fbfbd2 0%,#fafad0 55%,#f6f6dc 100%);box-sizing:border-box;border-left:1px solid #fff;border-top:1px solid #fff;border-right:1px solid #9fb9b9;"></div>
<span class="t" style="left:588.0px;top:207.78px;font-size:12px;color:#f40000;font-weight:bold;transform:translateX(-50%) scaleX(0.9273);transform-origin:50% 50%;text-decoration:underline;text-decoration-thickness:1px;text-underline-offset:1px;">analysis_date</span>
<div class="a" style="left:636px;top:202px;width:117px;height:23px;background:linear-gradient(180deg,#fbfbd2 0%,#fafad0 55%,#f6f6dc 100%);box-sizing:border-box;border-left:1px solid #fff;border-top:1px solid #fff;border-right:1px solid #9fb9b9;"></div>
<span class="t" style="left:696.0px;top:207.78px;font-size:12px;color:#f40000;font-weight:bold;transform:translateX(-50%) scaleX(0.8959);transform-origin:50% 50%;text-decoration:underline;text-decoration-thickness:1px;text-underline-offset:1px;">total_or_dissolved</span>
<div class="a" style="left:753px;top:202px;width:102px;height:23px;background:linear-gradient(180deg,#ffffff 0%,#fbfbfb 50%,#ececec 100%);box-sizing:border-box;border-left:1px solid #fff;border-top:1px solid #fff;border-right:1px solid #9fb9b9;"></div>
<span class="t" style="left:804.5px;top:207.78px;font-size:12px;color:#111;transform:translateX(-50%) scaleX(0.9123);transform-origin:50% 50%;">column_number</span>
<div class="a" style="left:855px;top:202px;width:117px;height:23px;background:linear-gradient(180deg,#fbfbd2 0%,#fafad0 55%,#f6f6dc 100%);box-sizing:border-box;border-left:1px solid #fff;border-top:1px solid #fff;border-right:1px solid #9fb9b9;"></div>
<span class="t" style="left:914.0px;top:207.78px;font-size:12px;color:#f40000;font-weight:bold;transform:translateX(-50%) scaleX(0.9300);transform-origin:50% 50%;text-decoration:underline;text-decoration-thickness:1px;text-underline-offset:1px;">test_type</span>
<div class="a" style="left:972px;top:202px;width:117px;height:23px;background:linear-gradient(180deg,#fbfbd2 0%,#fafad0 55%,#f6f6dc 100%);box-sizing:border-box;border-left:1px solid #fff;border-top:1px solid #fff;border-right:1px solid #9fb9b9;"></div>
<span class="t" style="left:1032.5px;top:207.78px;font-size:12px;color:#f40000;font-weight:bold;transform:translateX(-50%) scaleX(0.9193);transform-origin:50% 50%;text-decoration:underline;text-decoration-thickness:1px;text-underline-offset:1px;">test_batch_type</span>
<div class="a" style="left:1089px;top:202px;width:97px;height:23px;background:linear-gradient(180deg,#fbfbd2 0%,#fafad0 55%,#f6f6dc 100%);box-sizing:border-box;border-left:1px solid #fff;border-top:1px solid #fff;border-right:1px solid #9fb9b9;"></div>
<span class="t" style="left:1138.0px;top:207.78px;font-size:12px;color:#f40000;font-weight:bold;transform:translateX(-50%) scaleX(0.9113);transform-origin:50% 50%;">test_batch_id</span>
<div class="a" style="left:213px;top:225px;width:974px;height:1px;background:#8fb0b0;"></div>
<div class="gl" style="left:229px;top:246px;width:958px;height:1px;"></div>
<div class="a" style="left:213px;top:246px;width:16px;height:1px;background:#9fc0c0;"></div>
<div class="rh" style="top:226px;"></div>
<div class="gl" style="left:229px;top:267px;width:958px;height:1px;"></div>
<div class="a" style="left:213px;top:267px;width:16px;height:1px;background:#9fc0c0;"></div>
<div class="rh" style="top:247px;"></div>
<div class="gl" style="left:229px;top:288px;width:958px;height:1px;"></div>
<div class="a" style="left:213px;top:288px;width:16px;height:1px;background:#9fc0c0;"></div>
<div class="rh" style="top:268px;"></div>
<div class="gl" style="left:229px;top:309px;width:958px;height:1px;"></div>
<div class="a" style="left:213px;top:309px;width:16px;height:1px;background:#9fc0c0;"></div>
<div class="rh" style="top:289px;"></div>
<div class="gl" style="left:229px;top:330px;width:958px;height:1px;"></div>
<div class="a" style="left:213px;top:330px;width:16px;height:1px;background:#9fc0c0;"></div>
<div class="rh" style="top:310px;"></div>
<div class="gl" style="left:229px;top:351px;width:958px;height:1px;"></div>
<div class="a" style="left:213px;top:351px;width:16px;height:1px;background:#9fc0c0;"></div>
<div class="rh" style="top:331px;"></div>
<div class="gl" style="left:229px;top:372px;width:958px;height:1px;"></div>
<div class="a" style="left:213px;top:372px;width:16px;height:1px;background:#9fc0c0;"></div>
<div class="rh" style="top:352px;"></div>
<div class="gl" style="left:229px;top:393px;width:958px;height:1px;"></div>
<div class="a" style="left:213px;top:393px;width:16px;height:1px;background:#9fc0c0;"></div>
<div class="rh" style="top:373px;"></div>
<div class="gl" style="left:229px;top:414px;width:958px;height:1px;"></div>
<div class="a" style="left:213px;top:414px;width:16px;height:1px;background:#9fc0c0;"></div>
<div class="rh" style="top:394px;"></div>
<div class="gl" style="left:229px;top:435px;width:958px;height:1px;"></div>
<div class="a" style="left:213px;top:435px;width:16px;height:1px;background:#9fc0c0;"></div>
<div class="rh" style="top:415px;"></div>
<div class="gl" style="left:229px;top:456px;width:958px;height:1px;"></div>
<div class="a" style="left:213px;top:456px;width:16px;height:1px;background:#9fc0c0;"></div>
<div class="rh" style="top:436px;"></div>
<div class="gl" style="left:229px;top:477px;width:958px;height:1px;"></div>
<div class="a" style="left:213px;top:477px;width:16px;height:1px;background:#9fc0c0;"></div>
<div class="rh" style="top:457px;"></div>
<div class="gl" style="left:229px;top:498px;width:958px;height:1px;"></div>
<div class="a" style="left:213px;top:498px;width:16px;height:1px;background:#9fc0c0;"></div>
<div class="rh" style="top:478px;"></div>
<div class="gl" style="left:229px;top:519px;width:958px;height:1px;"></div>
<div class="a" style="left:213px;top:519px;width:16px;height:1px;background:#9fc0c0;"></div>
<div class="rh" style="top:499px;"></div>
<div class="gl" style="left:229px;top:226px;width:1px;height:294px;"></div>
<div class="gl" style="left:286px;top:226px;width:1px;height:294px;"></div>
<div class="gl" style="left:400px;top:226px;width:1px;height:294px;"></div>
<div class="gl" style="left:539px;top:226px;width:1px;height:294px;"></div>
<div class="gl" style="left:636px;top:226px;width:1px;height:294px;"></div>
<div class="gl" style="left:753px;top:226px;width:1px;height:294px;"></div>
<div class="gl" style="left:855px;top:226px;width:1px;height:294px;"></div>
<div class="gl" style="left:972px;top:226px;width:1px;height:294px;"></div>
<div class="gl" style="left:1089px;top:226px;width:1px;height:294px;"></div>
<div class="gl" style="left:1186px;top:226px;width:1px;height:294px;"></div>
<svg style="left:218px;top:232px" width="6" height="9" viewBox="0 0 6 9"><path d="M0 0L5.5 4.5L0 9Z" fill="#000"/></svg>
<span class="t" style="left:235.5px;top:227.98px;font-size:12px;color:#111;transform:scaleX(0.9167);transform-origin:0 50%;">1</span>
<span class="t" style="left:292px;top:227.98px;font-size:12px;color:#d2691e;transform:scaleX(0.8851);transform-origin:0 50%;">#SYS_SAMPLE_CO</span>
<span class="t" style="left:406px;top:227.98px;font-size:12px;color:#d2691e;transform:scaleX(0.9056);transform-origin:0 50%;">LAB_ANL_METHOD_NA</span>
<span class="t" style="left:545px;top:227.98px;font-size:12px;color:#d2691e;transform:scaleX(0.9606);transform-origin:0 50%;">analysis_date</span>
<span class="t" style="left:642px;top:226.98px;font-size:12px;color:#d2691e;transform:scaleX(0.9297);transform-origin:0 50%;">TOTAL_OR_DISSOL</span>
<span class="t" style="left:759px;top:227.98px;font-size:12px;color:#d2691e;transform:scaleX(0.9167);transform-origin:0 50%;">column_number</span>
<span class="t" style="left:861px;top:227.98px;font-size:12px;color:#d2691e;transform:scaleX(0.9167);transform-origin:0 50%;">TEST_TYPE</span>
<span class="t" style="left:978px;top:227.98px;font-size:12px;color:#d2691e;transform:scaleX(0.9032);transform-origin:0 50%;">TEST_BATCH_TYPE</span>
<span class="t" style="left:1095px;top:227.98px;font-size:12px;color:#d2691e;transform:scaleX(0.9167);transform-origin:0 50%;">test_batch_id</span>
<span class="t" style="left:235.5px;top:248.98px;font-size:12px;color:#111;transform:scaleX(0.9167);transform-origin:0 50%;">2</span>
<span class="t" style="left:292px;top:248.98px;font-size:12px;color:#d2691e;transform:scaleX(0.9167);transform-origin:0 50%;">#TEXT(40)</span>
<span class="t" style="left:406px;top:248.98px;font-size:12px;color:#d2691e;transform:scaleX(0.9167);transform-origin:0 50%;">TEXT(35)</span>
<span class="t" style="left:545px;top:248.98px;font-size:12px;color:#d2691e;transform:scaleX(0.9167);transform-origin:0 50%;">DateTime</span>
<span class="t" style="left:642px;top:248.98px;font-size:12px;color:#d2691e;transform:scaleX(0.9167);transform-origin:0 50%;">TEXT(1)</span>
<span class="t" style="left:759px;top:248.98px;font-size:12px;color:#d2691e;transform:scaleX(0.9167);transform-origin:0 50%;">Text(2)</span>
<span class="t" style="left:861px;top:248.98px;font-size:12px;color:#d2691e;transform:scaleX(0.9167);transform-origin:0 50%;">TEXT(10)</span>
<span class="t" style="left:978px;top:248.98px;font-size:12px;color:#d2691e;transform:scaleX(0.9167);transform-origin:0 50%;">TEXT(10)</span>
<span class="t" style="left:1095px;top:248.98px;font-size:12px;color:#d2691e;transform:scaleX(0.9167);transform-origin:0 50%;">Text(20)</span>
<span class="t" style="left:235.5px;top:269.98px;font-size:12px;color:#f40000;font-weight:bold;transform:scaleX(0.9167);transform-origin:0 50%;">3</span>
<span class="t" style="left:292px;top:269.98px;font-size:12px;color:#111;transform:scaleX(0.9167);transform-origin:0 50%;">B-45_20080325</span>
<span class="t" style="left:406px;top:269.98px;font-size:12px;color:#111;transform:scaleX(0.9167);transform-origin:0 50%;">E300.0</span>
<span class="t" style="left:545px;top:268.98px;font-size:12px;color:#111;transform:scaleX(0.8990);transform-origin:0 50%;">3/27/2008 12:00:0</span>
<span class="t" style="left:642px;top:269.98px;font-size:12px;color:#111;transform:scaleX(0.9167);transform-origin:0 50%;">N</span>
<span class="t" style="left:759px;top:269.98px;font-size:12px;color:#111;transform:scaleX(0.9167);transform-origin:0 50%;">NA</span>
<span class="t" style="left:861px;top:269.98px;font-size:12px;color:#111;transform:scaleX(0.9167);transform-origin:0 50%;">INITIAL</span>
<span class="t" style="left:978px;top:269.98px;font-size:12px;color:#111;transform:scaleX(0.9167);transform-origin:0 50%;">ANALYSIS</span>
<span class="t" style="left:1095px;top:269.98px;font-size:12px;color:#111;transform:scaleX(0.9167);transform-origin:0 50%;">R3114</span>
<span class="t" style="left:235.5px;top:290.98px;font-size:12px;color:#f40000;font-weight:bold;transform:scaleX(0.9167);transform-origin:0 50%;">4</span>
<span class="t" style="left:292px;top:290.98px;font-size:12px;color:#111;transform:scaleX(0.8992);transform-origin:0 50%;">B-45_20080325_MS</span>
<span class="t" style="left:406px;top:290.98px;font-size:12px;color:#111;transform:scaleX(0.9167);transform-origin:0 50%;">E300.0</span>
<span class="t" style="left:545px;top:289.98px;font-size:12px;color:#111;transform:scaleX(0.8990);transform-origin:0 50%;">3/27/2008 12:00:0</span>
<span class="t" style="left:642px;top:290.98px;font-size:12px;color:#111;transform:scaleX(0.9167);transform-origin:0 50%;">N</span>
<span class="t" style="left:759px;top:290.98px;font-size:12px;color:#111;transform:scaleX(0.9167);transform-origin:0 50%;">NA</span>
<span class="t" style="left:861px;top:290.98px;font-size:12px;color:#111;transform:scaleX(0.9167);transform-origin:0 50%;">INITIAL</span>
<span class="t" style="left:978px;top:290.98px;font-size:12px;color:#111;transform:scaleX(0.9167);transform-origin:0 50%;">ANALYSIS</span>
<span class="t" style="left:1095px;top:290.98px;font-size:12px;color:#111;transform:scaleX(0.9167);transform-origin:0 50%;">R3114</span>
<span class="t" style="left:235.5px;top:311.98px;font-size:12px;color:#f40000;font-weight:bold;transform:scaleX(0.9167);transform-origin:0 50%;">5</span>
<span class="t" style="left:292px;top:311.98px;font-size:12px;color:#111;transform:scaleX(0.8992);transform-origin:0 50%;">B-45_20080325_MS</span>
<span class="t" style="left:406px;top:311.98px;font-size:12px;color:#111;transform:scaleX(0.9167);transform-origin:0 50%;">E300.0</span>
<span class="t" style="left:545px;top:310.98px;font-size:12px;color:#111;transform:scaleX(0.8990);transform-origin:0 50%;">3/27/2008 12:00:0</span>
<span class="t" style="left:642px;top:311.98px;font-size:12px;color:#111;transform:scaleX(0.9167);transform-origin:0 50%;">N</span>
<span class="t" style="left:759px;top:311.98px;font-size:12px;color:#111;transform:scaleX(0.9167);transform-origin:0 50%;">NA</span>
<span class="t" style="left:861px;top:311.98px;font-size:12px;color:#111;transform:scaleX(0.9167);transform-origin:0 50%;">INITIAL</span>
<span class="t" style="left:978px;top:311.98px;font-size:12px;color:#111;transform:scaleX(0.9167);transform-origin:0 50%;">ANALYSIS</span>
<span class="t" style="left:1095px;top:311.98px;font-size:12px;color:#111;transform:scaleX(0.9167);transform-origin:0 50%;">R3114</span>
<span class="t" style="left:235.5px;top:332.98px;font-size:12px;color:#f40000;font-weight:bold;transform:scaleX(0.9167);transform-origin:0 50%;">6</span>
<span class="t" style="left:292px;top:332.98px;font-size:12px;color:#111;transform:scaleX(0.8994);transform-origin:0 50%;">TRIPBLANK_200803</span>
<span class="t" style="left:406px;top:332.98px;font-size:12px;color:#111;transform:scaleX(0.9167);transform-origin:0 50%;">E200.7</span>
<span class="t" style="left:545px;top:331.98px;font-size:12px;color:#111;transform:scaleX(0.8990);transform-origin:0 50%;">3/27/2008 12:00:0</span>
<span class="t" style="left:642px;top:332.98px;font-size:12px;color:#111;transform:scaleX(0.9167);transform-origin:0 50%;">T</span>
<span class="t" style="left:759px;top:332.98px;font-size:12px;color:#111;transform:scaleX(0.9167);transform-origin:0 50%;">NA</span>
<span class="t" style="left:861px;top:332.98px;font-size:12px;color:#111;transform:scaleX(0.9167);transform-origin:0 50%;">INITIAL</span>
<span class="t" style="left:978px;top:332.98px;font-size:12px;color:#111;transform:scaleX(0.9167);transform-origin:0 50%;">ANALYSIS</span>
<span class="t" style="left:1095px;top:332.98px;font-size:12px;color:#111;transform:scaleX(0.9167);transform-origin:0 50%;">R3114</span>
<span class="t" style="left:235.5px;top:353.98px;font-size:12px;color:#f40000;font-weight:bold;transform:scaleX(0.9167);transform-origin:0 50%;">7</span>
<span class="t" style="left:292px;top:353.98px;font-size:12px;color:#111;transform:scaleX(0.8994);transform-origin:0 50%;">TRIPBLANK_200803</span>
<span class="t" style="left:406px;top:353.98px;font-size:12px;color:#111;transform:scaleX(0.9167);transform-origin:0 50%;">E200.8</span>
<span class="t" style="left:545px;top:352.98px;font-size:12px;color:#111;transform:scaleX(0.8990);transform-origin:0 50%;">3/27/2008 12:00:0</span>
<span class="t" style="left:642px;top:353.98px;font-size:12px;color:#111;transform:scaleX(0.9167);transform-origin:0 50%;">T</span>
<span class="t" style="left:759px;top:353.98px;font-size:12px;color:#111;transform:scaleX(0.9167);transform-origin:0 50%;">NA</span>
<span class="t" style="left:861px;top:353.98px;font-size:12px;color:#111;transform:scaleX(0.9167);transform-origin:0 50%;">INITIAL</span>
<span class="t" style="left:978px;top:353.98px;font-size:12px;color:#111;transform:scaleX(0.9167);transform-origin:0 50%;">ANALYSIS</span>
<span class="t" style="left:1095px;top:353.98px;font-size:12px;color:#111;transform:scaleX(0.9167);transform-origin:0 50%;">R3114</span>
<span class="t" style="left:235.5px;top:374.98px;font-size:12px;color:#f40000;font-weight:bold;transform:scaleX(0.9167);transform-origin:0 50%;">8</span>
<span class="t" style="left:292px;top:374.98px;font-size:12px;color:#111;transform:scaleX(0.9167);transform-origin:0 50%;">B-30_20080325</span>
<span class="t" style="left:406px;top:374.98px;font-size:12px;color:#111;transform:scaleX(0.9167);transform-origin:0 50%;">E200.7</span>
<span class="t" style="left:545px;top:373.98px;font-size:12px;color:#111;transform:scaleX(0.8990);transform-origin:0 50%;">3/27/2008 12:00:0</span>
<span class="t" style="left:642px;top:374.98px;font-size:12px;color:#111;transform:scaleX(0.9167);transform-origin:0 50%;">T</span>
<span class="t" style="left:759px;top:374.98px;font-size:12px;color:#111;transform:scaleX(0.9167);transform-origin:0 50%;">NA</span>
<span class="t" style="left:861px;top:374.98px;font-size:12px;color:#111;transform:scaleX(0.9167);transform-origin:0 50%;">INITIAL</span>
<span class="t" style="left:978px;top:374.98px;font-size:12px;color:#111;transform:scaleX(0.9167);transform-origin:0 50%;">ANALYSIS</span>
<span class="t" style="left:1095px;top:374.98px;font-size:12px;color:#111;transform:scaleX(0.9167);transform-origin:0 50%;">R3114</span>
<span class="t" style="left:235.5px;top:395.98px;font-size:12px;color:#f40000;font-weight:bold;transform:scaleX(0.9167);transform-origin:0 50%;">9</span>
<span class="t" style="left:292px;top:395.98px;font-size:12px;color:#111;transform:scaleX(0.9167);transform-origin:0 50%;">B-30_20080325</span>
<span class="t" style="left:406px;top:395.98px;font-size:12px;color:#111;transform:scaleX(0.9167);transform-origin:0 50%;">E200.8</span>
<span class="t" style="left:545px;top:394.98px;font-size:12px;color:#111;transform:scaleX(0.8990);transform-origin:0 50%;">3/27/2008 12:00:0</span>
<span class="t" style="left:642px;top:395.98px;font-size:12px;color:#111;transform:scaleX(0.9167);transform-origin:0 50%;">T</span>
<span class="t" style="left:759px;top:395.98px;font-size:12px;color:#111;transform:scaleX(0.9167);transform-origin:0 50%;">NA</span>
<span class="t" style="left:861px;top:395.98px;font-size:12px;color:#111;transform:scaleX(0.9167);transform-origin:0 50%;">INITIAL</span>
<span class="t" style="left:978px;top:395.98px;font-size:12px;color:#111;transform:scaleX(0.9167);transform-origin:0 50%;">ANALYSIS</span>
<span class="t" style="left:1095px;top:395.98px;font-size:12px;color:#111;transform:scaleX(0.9167);transform-origin:0 50%;">R3114</span>
<span class="t" style="left:235.5px;top:416.98px;font-size:12px;color:#f40000;font-weight:bold;transform:scaleX(0.9167);transform-origin:0 50%;">10</span>
<span class="t" style="left:292px;top:416.98px;font-size:12px;color:#111;transform:scaleX(0.9020);transform-origin:0 50%;">B-30_20080325_FD</span>
<span class="t" style="left:406px;top:416.98px;font-size:12px;color:#111;transform:scaleX(0.9167);transform-origin:0 50%;">E200.7</span>
<span class="t" style="left:545px;top:415.98px;font-size:12px;color:#111;transform:scaleX(0.8990);transform-origin:0 50%;">3/27/2008 12:00:0</span>
<span class="t" style="left:642px;top:416.98px;font-size:12px;color:#111;transform:scaleX(0.9167);transform-origin:0 50%;">T</span>
<span class="t" style="left:759px;top:416.98px;font-size:12px;color:#111;transform:scaleX(0.9167);transform-origin:0 50%;">NA</span>
<span class="t" style="left:861px;top:416.98px;font-size:12px;color:#111;transform:scaleX(0.9167);transform-origin:0 50%;">INITIAL</span>
<span class="t" style="left:978px;top:416.98px;font-size:12px;color:#111;transform:scaleX(0.9167);transform-origin:0 50%;">ANALYSIS</span>
<span class="t" style="left:1095px;top:416.98px;font-size:12px;color:#111;transform:scaleX(0.9167);transform-origin:0 50%;">R3114</span>
<span class="t" style="left:235.5px;top:437.98px;font-size:12px;color:#f40000;font-weight:bold;transform:scaleX(0.9167);transform-origin:0 50%;">11</span>
<span class="t" style="left:292px;top:437.98px;font-size:12px;color:#111;transform:scaleX(0.9167);transform-origin:0 50%;">B-31_20080325</span>
<span class="t" style="left:406px;top:437.98px;font-size:12px;color:#111;transform:scaleX(0.9167);transform-origin:0 50%;">E200.7</span>
<span class="t" style="left:545px;top:436.98px;font-size:12px;color:#111;transform:scaleX(0.8990);transform-origin:0 50%;">3/27/2008 12:00:0</span>
<span class="t" style="left:642px;top:437.98px;font-size:12px;color:#111;transform:scaleX(0.9167);transform-origin:0 50%;">T</span>
<span class="t" style="left:759px;top:437.98px;font-size:12px;color:#111;transform:scaleX(0.9167);transform-origin:0 50%;">NA</span>
<span class="t" style="left:861px;top:437.98px;font-size:12px;color:#111;transform:scaleX(0.9167);transform-origin:0 50%;">INITIAL</span>
<span class="t" style="left:978px;top:437.98px;font-size:12px;color:#111;transform:scaleX(0.9167);transform-origin:0 50%;">ANALYSIS</span>
<span class="t" style="left:1095px;top:437.98px;font-size:12px;color:#111;transform:scaleX(0.9167);transform-origin:0 50%;">R3114</span>
<span class="t" style="left:235.5px;top:458.98px;font-size:12px;color:#f40000;font-weight:bold;transform:scaleX(0.9167);transform-origin:0 50%;">12</span>
<span class="t" style="left:292px;top:458.98px;font-size:12px;color:#111;transform:scaleX(0.9167);transform-origin:0 50%;">B-31_20080325</span>
<span class="t" style="left:406px;top:458.98px;font-size:12px;color:#111;transform:scaleX(0.9167);transform-origin:0 50%;">E200.8</span>
<span class="t" style="left:545px;top:457.98px;font-size:12px;color:#111;transform:scaleX(0.8990);transform-origin:0 50%;">3/27/2008 12:00:0</span>
<span class="t" style="left:642px;top:458.98px;font-size:12px;color:#111;transform:scaleX(0.9167);transform-origin:0 50%;">T</span>
<span class="t" style="left:759px;top:458.98px;font-size:12px;color:#111;transform:scaleX(0.9167);transform-origin:0 50%;">NA</span>
<span class="t" style="left:861px;top:458.98px;font-size:12px;color:#111;transform:scaleX(0.9167);transform-origin:0 50%;">INITIAL</span>
<span class="t" style="left:978px;top:458.98px;font-size:12px;color:#111;transform:scaleX(0.9167);transform-origin:0 50%;">ANALYSIS</span>
<span class="t" style="left:1095px;top:458.98px;font-size:12px;color:#111;transform:scaleX(0.9167);transform-origin:0 50%;">R3114</span>
<span class="t" style="left:235.5px;top:479.98px;font-size:12px;color:#f40000;font-weight:bold;transform:scaleX(0.9167);transform-origin:0 50%;">13</span>
<span class="t" style="left:292px;top:479.98px;font-size:12px;color:#111;transform:scaleX(0.9167);transform-origin:0 50%;">B-33_20080325</span>
<span class="t" style="left:406px;top:479.98px;font-size:12px;color:#111;transform:scaleX(0.9167);transform-origin:0 50%;">E200.8</span>
<span class="t" style="left:545px;top:478.98px;font-size:12px;color:#111;transform:scaleX(0.8990);transform-origin:0 50%;">3/27/2008 12:00:0</span>
<span class="t" style="left:642px;top:479.98px;font-size:12px;color:#111;transform:scaleX(0.9167);transform-origin:0 50%;">T</span>
<span class="t" style="left:759px;top:479.98px;font-size:12px;color:#111;transform:scaleX(0.9167);transform-origin:0 50%;">NA</span>
<span class="t" style="left:861px;top:479.98px;font-size:12px;color:#111;transform:scaleX(0.9167);transform-origin:0 50%;">INITIAL</span>
<span class="t" style="left:978px;top:479.98px;font-size:12px;color:#111;transform:scaleX(0.9167);transform-origin:0 50%;">ANALYSIS</span>
<span class="t" style="left:1095px;top:479.98px;font-size:12px;color:#111;transform:scaleX(0.9167);transform-origin:0 50%;">R3114</span>
<span class="t" style="left:235.5px;top:500.98px;font-size:12px;color:#f40000;font-weight:bold;transform:scaleX(0.9167);transform-origin:0 50%;">14</span>
<span class="t" style="left:292px;top:500.98px;font-size:12px;color:#111;transform:scaleX(0.9167);transform-origin:0 50%;">B-38_20080325</span>
<span class="t" style="left:406px;top:500.98px;font-size:12px;color:#111;transform:scaleX(0.9167);transform-origin:0 50%;">E200.8</span>
<span class="t" style="left:545px;top:499.98px;font-size:12px;color:#111;transform:scaleX(0.8990);transform-origin:0 50%;">3/27/2008 12:00:0</span>
<span class="t" style="left:642px;top:500.98px;font-size:12px;color:#111;transform:scaleX(0.9167);transform-origin:0 50%;">T</span>
<span class="t" style="left:759px;top:500.98px;font-size:12px;color:#111;transform:scaleX(0.9167);transform-origin:0 50%;">NA</span>
<span class="t" style="left:861px;top:500.98px;font-size:12px;color:#111;transform:scaleX(0.9167);transform-origin:0 50%;">INITIAL</span>
<span class="t" style="left:978px;top:500.98px;font-size:12px;color:#111;transform:scaleX(0.9167);transform-origin:0 50%;">ANALYSIS</span>
<span class="t" style="left:1095px;top:500.98px;font-size:12px;color:#111;transform:scaleX(0.9167);transform-origin:0 50%;">R3114</span>
<div class="a" style="left:9px;top:649px;width:1285px;height:23px;background:#e4e4e4;"></div>
<div class="a" style="left:9px;top:647px;width:203px;height:3px;background:#f0f0f0;"></div>
<div class="a" style="left:10px;top:650px;width:117px;height:19px;background:#efefef;border:1px solid #dadada;border-left-color:#f8f8f8;border-top-color:#f8f8f8;"></div>
<div class="a" style="left:128px;top:649px;width:66px;height:20px;background:#fff;"></div>
<svg style="left:15px;top:652px" width="16" height="16" viewBox="0 0 16 16"><g shape-rendering="crispEdges"><rect x="0" y="0" width="13" height="12" fill="#5aae5f"/><g fill="#fff"><rect x="1" y="3" width="3" height="2"/><rect x="5" y="3" width="3" height="2"/><rect x="9" y="3" width="3" height="2"/><rect x="1" y="6" width="3" height="2"/><rect x="5" y="6" width="3" height="2"/><rect x="9" y="6" width="3" height="2"/><rect x="1" y="9" width="3" height="2"/><rect x="5" y="9" width="3" height="2"/></g></g>
<circle cx="12" cy="12" r="2.9" fill="#fff" stroke="#c9849f" stroke-width="1.2"/><path d="M10.8 10.8L13.2 13.2M13.2 10.8L10.8 13.2" stroke="#c9849f" stroke-width="1"/></svg>
<span class="t" style="left:33.8px;top:653.18px;font-size:12px;color:#111;transform:scaleX(0.9312);transform-origin:0 50%;">Reference Values</span>
<svg style="left:132px;top:654px" width="13" height="15" viewBox="0 0 13 15"><path d="M3.6 0.7H11Q12.2 0.7 12.2 1.9V12.8Q12.2 14 11 14H2Q0.8 14 0.8 12.8V3.6Z" fill="#fff" stroke="#4a90d0" stroke-width="1.4" stroke-linejoin="round"/><rect x="2.2" y="3.6" width="8.8" height="9.2" fill="#808080"/><g fill="#fff"><rect x="5" y="1.8" width="2" height="1.6"/><rect x="8" y="1.8" width="2.2" height="1.6"/><rect x="2.4" y="4.4" width="1.8" height="1.8"/><rect x="5" y="4.4" width="2" height="1.8"/><rect x="8" y="4.4" width="2.2" height="1.8"/><rect x="2.4" y="7.2" width="1.8" height="1.8"/><rect x="5" y="7.2" width="2" height="1.8"/><rect x="8" y="7.2" width="2.2" height="1.8"/><rect x="2.4" y="10" width="1.8" height="1.8"/><rect x="5" y="10" width="2" height="1.8"/><rect x="8" y="10" width="2.2" height="1.8"/></g></svg>
<span class="t" style="left:151.3px;top:654.58px;font-size:12px;color:#111;transform:scaleX(0.8972);transform-origin:0 50%;">EQEDD</span>
<div class="a" style="left:198px;top:650px;width:240px;height:18px;background:#efefef;border:1px solid #dcdcdc;border-left-color:#f8f8f8;border-top-color:#f8f8f8;"></div>
<svg style="left:201px;top:652px" width="16" height="16" viewBox="0 0 16 16"><g shape-rendering="crispEdges"><rect x="0" y="0" width="13" height="12" fill="#5aae5f"/><g fill="#fff"><rect x="1" y="3" width="3" height="2"/><rect x="5" y="3" width="3" height="2"/><rect x="9" y="3" width="3" height="2"/><rect x="1" y="6" width="3" height="2"/><rect x="5" y="6" width="3" height="2"/><rect x="9" y="6" width="3" height="2"/><rect x="1" y="9" width="3" height="2"/><rect x="5" y="9" width="3" height="2"/></g></g>
<circle cx="12" cy="12" r="2.9" fill="#fff" stroke="#c9849f" stroke-width="1.2"/><path d="M10.8 10.8L13.2 13.2M13.2 10.8L10.8 13.2" stroke="#c9849f" stroke-width="1"/></svg>
<div class="a" style="left:219px;top:655px;width:4px;height:10px;background:#d2d2d2;"></div>
<div class="a" style="left:223px;top:655px;width:4px;height:10px;background:#cfd3d6;"></div>
<div class="a" style="left:227px;top:655px;width:4px;height:10px;background:#c2c9d1;"></div>
<div class="a" style="left:231px;top:655px;width:4px;height:10px;background:#b9bcc0;"></div>
<div class="a" style="left:235px;top:655px;width:4px;height:10px;background:#c6c4c0;"></div>
<div class="a" style="left:239px;top:655px;width:4px;height:10px;background:#d0cfcc;"></div>
<div class="a" style="left:243px;top:655px;width:4px;height:10px;background:#c3c2c0;"></div>
<div class="a" style="left:247px;top:655px;width:4px;height:10px;background:#b8b8ba;"></div>
<div class="a" style="left:251px;top:655px;width:4px;height:10px;background:#c9c9c9;"></div>
<div class="a" style="left:255px;top:655px;width:4px;height:10px;background:#cfd1d3;"></div>
<div class="a" style="left:259px;top:655px;width:4px;height:10px;background:#d6d6d6;"></div>
<div class="a" style="left:263px;top:655px;width:4px;height:10px;background:#c5c5c5;"></div>
<div class="a" style="left:267px;top:655px;width:4px;height:10px;background:#d3d3d3;"></div>
<span class="t" style="left:270.8px;top:653.18px;font-size:12px;color:#111;transform:scaleX(0.9330);transform-origin:0 50%;">\Springfield Metal Plating Facility</span>
<div class="a" style="left:194px;top:641px;width:254px;height:34px;border:2px solid #ff0000;z-index:5;"></div>
<div class="a" style="left:9px;top:672px;height:19px;background:linear-gradient(180deg,#fdfdfa 0%,#f9f9f3 40%,#eaeadc 68%,#c2c2aa 100%);border-bottom:1px solid #77776a;border-right:1px solid #77776a;box-sizing:content-box;width:1283px;"></div>
<div class="a" style="left:9px;top:692px;width:1285px;height:3px;background:#f6f6f6;"></div>
<div class="a" style="left:13px;top:674px;width:11px;height:14px;border:1px dotted #000;"></div>
<svg style="left:15px;top:676px" width="9" height="12" viewBox="0 0 9 12"><path d="M1.5 1.5L4.5 4.5L7.5 1.5M1.5 6.5L4.5 9.5L7.5 6.5" fill="none" stroke="#000" stroke-width="1.5"/></svg>
<span class="t" style="left:29px;top:675.68px;font-size:12px;color:#111;transform:scaleX(0.9094);transform-origin:0 50%;">Status Window</span>
<span class="t" style="left:18.4px;top:700.58px;font-size:12px;color:#ffffff;transform:scaleX(0.9779);transform-origin:0 50%;">Format: C:\Program Files\EarthSoft\EQuIS\</span>
<span class="t" style="left:248px;top:700.58px;font-size:12px;color:#ffffff;transform:scaleX(0.8545);transform-origin:0 50%;">EDD:</span>
<span class="t" style="left:827.3px;top:700.58px;font-size:12px;color:#ffffff;transform:scaleX(0.9568);transform-origin:0 50%;">\EQuIS\Tutor\EDD Tutorial\EQEDD\EQEDD_Good.xls</span>
<span class="t" style="left:1129px;top:700.58px;font-size:12px;color:#ffffff;transform:scaleX(0.9213);transform-origin:0 50%;">1.02.111</span>
<span class="t" style="left:1198.5px;top:700.58px;font-size:12px;color:#ffffff;transform:scaleX(0.9560);transform-origin:0 50%;">EarthSoft, Inc.</span>
<div class="a" style="left:277px;top:702px;width:5px;height:5px;background:rgba(190,228,230,0.28);"></div>
<div class="a" style="left:277px;top:707px;width:5px;height:5px;background:rgba(190,228,230,0.3);"></div>
<div class="a" style="left:282px;top:702px;width:5px;height:5px;background:rgba(190,228,230,0.22);"></div>
<div class="a" style="left:282px;top:707px;width:5px;height:5px;background:rgba(190,228,230,0.2);"></div>
<div class="a" style="left:287px;top:702px;width:5px;height:5px;background:rgba(190,228,230,0.26);"></div>
<div class="a" style="left:287px;top:707px;width:5px;height:5px;background:rgba(190,228,230,0.5);"></div>
<div class="a" style="left:292px;top:702px;width:5px;height:5px;background:rgba(190,228,230,0.26);"></div>
<div class="a" style="left:292px;top:707px;width:5px;height:5px;background:rgba(190,228,230,0.28);"></div>
<div class="a" style="left:297px;top:702px;width:5px;height:5px;background:rgba(190,228,230,0.3);"></div>
<div class="a" style="left:297px;top:707px;width:5px;height:5px;background:rgba(190,228,230,0.2);"></div>
<div class="a" style="left:302px;top:702px;width:5px;height:5px;background:rgba(190,228,230,0.5);"></div>
<div class="a" style="left:302px;top:707px;width:5px;height:5px;background:rgba(190,228,230,0.34);"></div>
<div class="a" style="left:307px;top:702px;width:5px;height:5px;background:rgba(190,228,230,0.2);"></div>
<div class="a" style="left:307px;top:707px;width:5px;height:5px;background:rgba(190,228,230,0.26);"></div>
<div class="a" style="left:312px;top:702px;width:5px;height:5px;background:rgba(190,228,230,0.22);"></div>
<div class="a" style="left:312px;top:707px;width:5px;height:5px;background:rgba(190,228,230,0.22);"></div>
<div class="a" style="left:317px;top:702px;width:5px;height:5px;background:rgba(190,228,230,0.26);"></div>
<div class="a" style="left:317px;top:707px;width:5px;height:5px;background:rgba(190,228,230,0.34);"></div>
<div class="a" style="left:322px;top:702px;width:5px;height:5px;background:rgba(190,228,230,0.26);"></div>
<div class="a" style="left:322px;top:707px;width:5px;height:5px;background:rgba(190,228,230,0.5);"></div>
<div class="a" style="left:327px;top:702px;width:5px;height:5px;background:rgba(190,228,230,0.22);"></div>
<div class="a" style="left:327px;top:707px;width:5px;height:5px;background:rgba(190,228,230,0.2);"></div>
<div class="a" style="left:332px;top:702px;width:5px;height:5px;background:rgba(190,228,230,0.3);"></div>
<div class="a" style="left:332px;top:707px;width:5px;height:5px;background:rgba(190,228,230,0.26);"></div>
<div class="a" style="left:337px;top:702px;width:5px;height:5px;background:rgba(190,228,230,0.34);"></div>
<div class="a" style="left:337px;top:707px;width:5px;height:5px;background:rgba(190,228,230,0.3);"></div>
<div class="a" style="left:342px;top:702px;width:5px;height:5px;background:rgba(190,228,230,0.2);"></div>
<div class="a" style="left:342px;top:707px;width:5px;height:5px;background:rgba(190,228,230,0.3);"></div>
<div class="a" style="left:347px;top:702px;width:5px;height:5px;background:rgba(190,228,230,0.3);"></div>
<div class="a" style="left:347px;top:707px;width:5px;height:5px;background:rgba(190,228,230,0.22);"></div>
<div class="a" style="left:352px;top:702px;width:5px;height:5px;background:rgba(190,228,230,0.2);"></div>
<div class="a" style="left:352px;top:707px;width:5px;height:5px;background:rgba(190,228,230,0.34);"></div>
<div class="a" style="left:357px;top:702px;width:5px;height:5px;background:rgba(190,228,230,0.2);"></div>
<div class="a" style="left:357px;top:707px;width:5px;height:5px;background:rgba(190,228,230,0.5);"></div>
<div class="a" style="left:362px;top:702px;width:5px;height:5px;background:rgba(190,228,230,0.3);"></div>
<div class="a" style="left:362px;top:707px;width:5px;height:5px;background:rgba(190,228,230,0.4);"></div>
<div class="a" style="left:367px;top:702px;width:5px;height:5px;background:rgba(190,228,230,0.22);"></div>
<div class="a" style="left:367px;top:707px;width:5px;height:5px;background:rgba(190,228,230,0.3);"></div>
<div class="a" style="left:372px;top:702px;width:5px;height:5px;background:rgba(190,228,230,0.5);"></div>
<div class="a" style="left:372px;top:707px;width:5px;height:5px;background:rgba(190,228,230,0.26);"></div>
<div class="a" style="left:377px;top:702px;width:5px;height:5px;background:rgba(190,228,230,0.3);"></div>
<div class="a" style="left:377px;top:707px;width:5px;height:5px;background:rgba(190,228,230,0.4);"></div>
<div class="a" style="left:382px;top:702px;width:5px;height:5px;background:rgba(190,228,230,0.5);"></div>
<div class="a" style="left:382px;top:707px;width:5px;height:5px;background:rgba(190,228,230,0.3);"></div>
<div class="a" style="left:387px;top:702px;width:5px;height:5px;background:rgba(190,228,230,0.26);"></div>
<div class="a" style="left:387px;top:707px;width:5px;height:5px;background:rgba(190,228,230,0.3);"></div>
<div class="a" style="left:392px;top:702px;width:5px;height:5px;background:rgba(190,228,230,0.3);"></div>
<div class="a" style="left:392px;top:707px;width:5px;height:5px;background:rgba(190,228,230,0.34);"></div>
<div class="a" style="left:397px;top:702px;width:5px;height:5px;background:rgba(190,228,230,0.28);"></div>
<div class="a" style="left:397px;top:707px;width:5px;height:5px;background:rgba(190,228,230,0.26);"></div>
<div class="a" style="left:402px;top:702px;width:5px;height:5px;background:rgba(190,228,230,0.5);"></div>
<div class="a" style="left:402px;top:707px;width:5px;height:5px;background:rgba(190,228,230,0.26);"></div>
<div class="a" style="left:407px;top:702px;width:5px;height:5px;background:rgba(190,228,230,0.3);"></div>
<div class="a" style="left:407px;top:707px;width:5px;height:5px;background:rgba(190,228,230,0.2);"></div>
<div class="a" style="left:412px;top:702px;width:5px;height:5px;background:rgba(190,228,230,0.3);"></div>
<div class="a" style="left:412px;top:707px;width:5px;height:5px;background:rgba(190,228,230,0.34);"></div>
<div class="a" style="left:417px;top:702px;width:5px;height:5px;background:rgba(190,228,230,0.32);"></div>
<div class="a" style="left:417px;top:707px;width:5px;height:5px;background:rgba(190,228,230,0.5);"></div>
<div class="a" style="left:422px;top:702px;width:5px;height:5px;background:rgba(190,228,230,0.22);"></div>
<div class="a" style="left:422px;top:707px;width:5px;height:5px;background:rgba(190,228,230,0.28);"></div>
<div class="a" style="left:427px;top:702px;width:5px;height:5px;background:rgba(190,228,230,0.32);"></div>
<div class="a" style="left:427px;top:707px;width:5px;height:5px;background:rgba(190,228,230,0.3);"></div>
<div class="a" style="left:432px;top:702px;width:5px;height:5px;background:rgba(190,228,230,0.32);"></div>
<div class="a" style="left:432px;top:707px;width:5px;height:5px;background:rgba(190,228,230,0.28);"></div>
<div class="a" style="left:437px;top:702px;width:5px;height:5px;background:rgba(190,228,230,0.4);"></div>
<div class="a" style="left:437px;top:707px;width:5px;height:5px;background:rgba(190,228,230,0.34);"></div>
<div class="a" style="left:442px;top:702px;width:5px;height:5px;background:rgba(190,228,230,0.3);"></div>
<div class="a" style="left:442px;top:707px;width:5px;height:5px;background:rgba(190,228,230,0.34);"></div>
<div class="a" style="left:447px;top:702px;width:5px;height:5px;background:rgba(190,228,230,0.26);"></div>
<div class="a" style="left:447px;top:707px;width:5px;height:5px;background:rgba(190,228,230,0.3);"></div>
<div class="a" style="left:452px;top:702px;width:5px;height:5px;background:rgba(190,228,230,0.4);"></div>
<div class="a" style="left:452px;top:707px;width:5px;height:5px;background:rgba(190,228,230,0.5);"></div>
<div class="a" style="left:457px;top:702px;width:5px;height:5px;background:rgba(190,228,230,0.32);"></div>
<div class="a" style="left:457px;top:707px;width:5px;height:5px;background:rgba(190,228,230,0.28);"></div>
<div class="a" style="left:462px;top:702px;width:5px;height:5px;background:rgba(190,228,230,0.32);"></div>
<div class="a" style="left:462px;top:707px;width:5px;height:5px;background:rgba(190,228,230,0.4);"></div>
<div class="a" style="left:467px;top:702px;width:5px;height:5px;background:rgba(190,228,230,0.3);"></div>
<div class="a" style="left:467px;top:707px;width:5px;height:5px;background:rgba(190,228,230,0.26);"></div>
<div class="a" style="left:472px;top:702px;width:5px;height:5px;background:rgba(190,228,230,0.26);"></div>
<div class="a" style="left:472px;top:707px;width:5px;height:5px;background:rgba(190,228,230,0.5);"></div>
<div class="a" style="left:477px;top:702px;width:5px;height:5px;background:rgba(190,228,230,0.22);"></div>
<div class="a" style="left:477px;top:707px;width:5px;height:5px;background:rgba(190,228,230,0.3);"></div>
<div class="a" style="left:482px;top:702px;width:5px;height:5px;background:rgba(190,228,230,0.28);"></div>
<div class="a" style="left:482px;top:707px;width:5px;height:5px;background:rgba(190,228,230,0.3);"></div>
<div class="a" style="left:487px;top:702px;width:5px;height:5px;background:rgba(190,228,230,0.32);"></div>
<div class="a" style="left:487px;top:707px;width:5px;height:5px;background:rgba(190,228,230,0.22);"></div>
<div class="a" style="left:492px;top:702px;width:5px;height:5px;background:rgba(190,228,230,0.2);"></div>
<div class="a" style="left:492px;top:707px;width:5px;height:5px;background:rgba(190,228,230,0.26);"></div>
<div class="a" style="left:497px;top:702px;width:5px;height:5px;background:rgba(190,228,230,0.5);"></div>
<div class="a" style="left:497px;top:707px;width:5px;height:5px;background:rgba(190,228,230,0.3);"></div>
<div class="a" style="left:502px;top:702px;width:5px;height:5px;background:rgba(190,228,230,0.28);"></div>
<div class="a" style="left:502px;top:707px;width:5px;height:5px;background:rgba(190,228,230,0.28);"></div>
<div class="a" style="left:507px;top:702px;width:5px;height:5px;background:rgba(190,228,230,0.28);"></div>
<div class="a" style="left:507px;top:707px;width:5px;height:5px;background:rgba(190,228,230,0.3);"></div>
<div class="a" style="left:512px;top:702px;width:5px;height:5px;background:rgba(190,228,230,0.32);"></div>
<div class="a" style="left:512px;top:707px;width:5px;height:5px;background:rgba(190,228,230,0.3);"></div>
<div class="a" style="left:517px;top:702px;width:5px;height:5px;background:rgba(190,228,230,0.32);"></div>
<div class="a" style="left:517px;top:707px;width:5px;height:5px;background:rgba(190,228,230,0.26);"></div>
<div class="a" style="left:522px;top:702px;width:5px;height:5px;background:rgba(190,228,230,0.26);"></div>
<div class="a" style="left:522px;top:707px;width:5px;height:5px;background:rgba(190,228,230,0.4);"></div>
<div class="a" style="left:527px;top:702px;width:5px;height:5px;background:rgba(190,228,230,0.32);"></div>
<div class="a" style="left:527px;top:707px;width:5px;height:5px;background:rgba(190,228,230,0.26);"></div>
<div class="a" style="left:532px;top:702px;width:5px;height:5px;background:rgba(190,228,230,0.2);"></div>
<div class="a" style="left:532px;top:707px;width:5px;height:5px;background:rgba(190,228,230,0.4);"></div>
<div class="a" style="left:537px;top:702px;width:5px;height:5px;background:rgba(190,228,230,0.3);"></div>
<div class="a" style="left:537px;top:707px;width:5px;height:5px;background:rgba(190,228,230,0.32);"></div>
<div class="a" style="left:542px;top:702px;width:5px;height:5px;background:rgba(190,228,230,0.4);"></div>
<div class="a" style="left:542px;top:707px;width:5px;height:5px;background:rgba(190,228,230,0.22);"></div>
<div class="a" style="left:547px;top:702px;width:5px;height:5px;background:rgba(190,228,230,0.28);"></div>
<div class="a" style="left:547px;top:707px;width:5px;height:5px;background:rgba(190,228,230,0.2);"></div>
<div class="a" style="left:552px;top:702px;width:5px;height:5px;background:rgba(190,228,230,0.32);"></div>
<div class="a" style="left:552px;top:707px;width:5px;height:5px;background:rgba(190,228,230,0.28);"></div>
<div class="a" style="left:557px;top:702px;width:5px;height:5px;background:rgba(190,228,230,0.3);"></div>
<div class="a" style="left:557px;top:707px;width:5px;height:5px;background:rgba(190,228,230,0.3);"></div>
<div class="a" style="left:562px;top:702px;width:5px;height:5px;background:rgba(190,228,230,0.26);"></div>
<div class="a" style="left:562px;top:707px;width:5px;height:5px;background:rgba(190,228,230,0.32);"></div>
<div class="a" style="left:567px;top:702px;width:5px;height:5px;background:rgba(190,228,230,0.2);"></div>
<div class="a" style="left:567px;top:707px;width:5px;height:5px;background:rgba(190,228,230,0.34);"></div>
<div class="a" style="left:572px;top:702px;width:5px;height:5px;background:rgba(190,228,230,0.4);"></div>
<div class="a" style="left:572px;top:707px;width:5px;height:5px;background:rgba(190,228,230,0.3);"></div>
<div class="a" style="left:577px;top:702px;width:5px;height:5px;background:rgba(190,228,230,0.34);"></div>
<div class="a" style="left:577px;top:707px;width:5px;height:5px;background:rgba(190,228,230,0.22);"></div>
<div class="a" style="left:582px;top:702px;width:5px;height:5px;background:rgba(190,228,230,0.22);"></div>
<div class="a" style="left:582px;top:707px;width:5px;height:5px;background:rgba(190,228,230,0.32);"></div>
<div class="a" style="left:587px;top:702px;width:5px;height:5px;background:rgba(190,228,230,0.26);"></div>
<div class="a" style="left:587px;top:707px;width:5px;height:5px;background:rgba(190,228,230,0.3);"></div>
<div class="a" style="left:592px;top:702px;width:5px;height:5px;background:rgba(190,228,230,0.32);"></div>
<div class="a" style="left:592px;top:707px;width:5px;height:5px;background:rgba(190,228,230,0.22);"></div>
<div class="a" style="left:597px;top:702px;width:5px;height:5px;background:rgba(190,228,230,0.5);"></div>
<div class="a" style="left:597px;top:707px;width:5px;height:5px;background:rgba(190,228,230,0.4);"></div>
<div class="a" style="left:602px;top:702px;width:5px;height:5px;background:rgba(190,228,230,0.3);"></div>
<div class="a" style="left:602px;top:707px;width:5px;height:5px;background:rgba(190,228,230,0.22);"></div>
<div class="a" style="left:607px;top:702px;width:5px;height:5px;background:rgba(190,228,230,0.5);"></div>
<div class="a" style="left:607px;top:707px;width:5px;height:5px;background:rgba(190,228,230,0.4);"></div>
<div class="a" style="left:612px;top:702px;width:5px;height:5px;background:rgba(190,228,230,0.22);"></div>
<div class="a" style="left:612px;top:707px;width:5px;height:5px;background:rgba(190,228,230,0.28);"></div>
<div class="a" style="left:617px;top:702px;width:5px;height:5px;background:rgba(190,228,230,0.22);"></div>
<div class="a" style="left:617px;top:707px;width:5px;height:5px;background:rgba(190,228,230,0.34);"></div>
<div class="a" style="left:622px;top:702px;width:5px;height:5px;background:rgba(190,228,230,0.3);"></div>
<div class="a" style="left:622px;top:707px;width:5px;height:5px;background:rgba(190,228,230,0.26);"></div>
<div class="a" style="left:627px;top:702px;width:5px;height:5px;background:rgba(190,228,230,0.3);"></div>
<div class="a" style="left:627px;top:707px;width:5px;height:5px;background:rgba(190,228,230,0.3);"></div>
<div class="a" style="left:632px;top:702px;width:5px;height:5px;background:rgba(190,228,230,0.34);"></div>
<div class="a" style="left:632px;top:707px;width:5px;height:5px;background:rgba(190,228,230,0.34);"></div>
<div class="a" style="left:637px;top:702px;width:5px;height:5px;background:rgba(190,228,230,0.2);"></div>
<div class="a" style="left:637px;top:707px;width:5px;height:5px;background:rgba(190,228,230,0.32);"></div>
<div class="a" style="left:642px;top:702px;width:5px;height:5px;background:rgba(190,228,230,0.3);"></div>
<div class="a" style="left:642px;top:707px;width:5px;height:5px;background:rgba(190,228,230,0.3);"></div>
<div class="a" style="left:647px;top:702px;width:5px;height:5px;background:rgba(190,228,230,0.4);"></div>
<div class="a" style="left:647px;top:707px;width:5px;height:5px;background:rgba(190,228,230,0.4);"></div>
<div class="a" style="left:652px;top:702px;width:5px;height:5px;background:rgba(190,228,230,0.2);"></div>
<div class="a" style="left:652px;top:707px;width:5px;height:5px;background:rgba(190,228,230,0.3);"></div>
<div class="a" style="left:657px;top:702px;width:5px;height:5px;background:rgba(190,228,230,0.22);"></div>
<div class="a" style="left:657px;top:707px;width:5px;height:5px;background:rgba(190,228,230,0.5);"></div>
<div class="a" style="left:662px;top:702px;width:5px;height:5px;background:rgba(190,228,230,0.28);"></div>
<div class="a" style="left:662px;top:707px;width:5px;height:5px;background:rgba(190,228,230,0.3);"></div>
<div class="a" style="left:667px;top:702px;width:5px;height:5px;background:rgba(190,228,230,0.3);"></div>
<div class="a" style="left:667px;top:707px;width:5px;height:5px;background:rgba(190,228,230,0.28);"></div>
<div class="a" style="left:672px;top:702px;width:5px;height:5px;background:rgba(190,228,230,0.3);"></div>
<div class="a" style="left:672px;top:707px;width:5px;height:5px;background:rgba(190,228,230,0.5);"></div>
<div class="a" style="left:677px;top:702px;width:5px;height:5px;background:rgba(190,228,230,0.3);"></div>
<div class="a" style="left:677px;top:707px;width:5px;height:5px;background:rgba(190,228,230,0.2);"></div>
<div class="a" style="left:682px;top:702px;width:5px;height:5px;background:rgba(190,228,230,0.32);"></div>
<div class="a" style="left:682px;top:707px;width:5px;height:5px;background:rgba(190,228,230,0.5);"></div>
<div class="a" style="left:687px;top:702px;width:5px;height:5px;background:rgba(190,228,230,0.22);"></div>
<div class="a" style="left:687px;top:707px;width:5px;height:5px;background:rgba(190,228,230,0.22);"></div>
<div class="a" style="left:692px;top:702px;width:5px;height:5px;background:rgba(190,228,230,0.22);"></div>
<div class="a" style="left:692px;top:707px;width:5px;height:5px;background:rgba(190,228,230,0.22);"></div>
<div class="a" style="left:697px;top:702px;width:5px;height:5px;background:rgba(190,228,230,0.26);"></div>
<div class="a" style="left:697px;top:707px;width:5px;height:5px;background:rgba(190,228,230,0.32);"></div>
<div class="a" style="left:702px;top:702px;width:5px;height:5px;background:rgba(190,228,230,0.22);"></div>
<div class="a" style="left:702px;top:707px;width:5px;height:5px;background:rgba(190,228,230,0.2);"></div>
<div class="a" style="left:707px;top:702px;width:5px;height:5px;background:rgba(190,228,230,0.34);"></div>
<div class="a" style="left:707px;top:707px;width:5px;height:5px;background:rgba(190,228,230,0.26);"></div>
<div class="a" style="left:712px;top:702px;width:5px;height:5px;background:rgba(190,228,230,0.34);"></div>
<div class="a" style="left:712px;top:707px;width:5px;height:5px;background:rgba(190,228,230,0.32);"></div>
<div class="a" style="left:717px;top:702px;width:5px;height:5px;background:rgba(190,228,230,0.3);"></div>
<div class="a" style="left:717px;top:707px;width:5px;height:5px;background:rgba(190,228,230,0.26);"></div>
<div class="a" style="left:722px;top:702px;width:5px;height:5px;background:rgba(190,228,230,0.28);"></div>
<div class="a" style="left:722px;top:707px;width:5px;height:5px;background:rgba(190,228,230,0.3);"></div>
<div class="a" style="left:727px;top:702px;width:5px;height:5px;background:rgba(190,228,230,0.2);"></div>
<div class="a" style="left:727px;top:707px;width:5px;height:5px;background:rgba(190,228,230,0.26);"></div>
<div class="a" style="left:732px;top:702px;width:5px;height:5px;background:rgba(190,228,230,0.2);"></div>
<div class="a" style="left:732px;top:707px;width:5px;height:5px;background:rgba(190,228,230,0.3);"></div>
<div class="a" style="left:737px;top:702px;width:5px;height:5px;background:rgba(190,228,230,0.3);"></div>
<div class="a" style="left:737px;top:707px;width:5px;height:5px;background:rgba(190,228,230,0.5);"></div>
<div class="a" style="left:742px;top:702px;width:5px;height:5px;background:rgba(190,228,230,0.26);"></div>
<div class="a" style="left:742px;top:707px;width:5px;height:5px;background:rgba(190,228,230,0.28);"></div>
<div class="a" style="left:747px;top:702px;width:5px;height:5px;background:rgba(190,228,230,0.3);"></div>
<div class="a" style="left:747px;top:707px;width:5px;height:5px;background:rgba(190,228,230,0.2);"></div>
<div class="a" style="left:752px;top:702px;width:5px;height:5px;background:rgba(190,228,230,0.26);"></div>
<div class="a" style="left:752px;top:707px;width:5px;height:5px;background:rgba(190,228,230,0.34);"></div>
<div class="a" style="left:757px;top:702px;width:5px;height:5px;background:rgba(190,228,230,0.3);"></div>
<div class="a" style="left:757px;top:707px;width:5px;height:5px;background:rgba(190,228,230,0.22);"></div>
<div class="a" style="left:762px;top:702px;width:5px;height:5px;background:rgba(190,228,230,0.3);"></div>
<div class="a" style="left:762px;top:707px;width:5px;height:5px;background:rgba(190,228,230,0.4);"></div>
<div class="a" style="left:767px;top:702px;width:5px;height:5px;background:rgba(190,228,230,0.28);"></div>
<div class="a" style="left:767px;top:707px;width:5px;height:5px;background:rgba(190,228,230,0.3);"></div>
<div class="a" style="left:772px;top:702px;width:5px;height:5px;background:rgba(190,228,230,0.28);"></div>
<div class="a" style="left:772px;top:707px;width:5px;height:5px;background:rgba(190,228,230,0.32);"></div>
<div class="a" style="left:777px;top:702px;width:5px;height:5px;background:rgba(190,228,230,0.26);"></div>
<div class="a" style="left:777px;top:707px;width:5px;height:5px;background:rgba(190,228,230,0.26);"></div>
<div class="a" style="left:782px;top:702px;width:5px;height:5px;background:rgba(190,228,230,0.32);"></div>
<div class="a" style="left:782px;top:707px;width:5px;height:5px;background:rgba(190,228,230,0.32);"></div>
<div class="a" style="left:787px;top:702px;width:5px;height:5px;background:rgba(190,228,230,0.32);"></div>
<div class="a" style="left:787px;top:707px;width:5px;height:5px;background:rgba(190,228,230,0.32);"></div>
<div class="a" style="left:792px;top:702px;width:5px;height:5px;background:rgba(190,228,230,0.4);"></div>
<div class="a" style="left:792px;top:707px;width:5px;height:5px;background:rgba(190,228,230,0.26);"></div>
<div class="a" style="left:797px;top:702px;width:5px;height:5px;background:rgba(190,228,230,0.3);"></div>
<div class="a" style="left:797px;top:707px;width:5px;height:5px;background:rgba(190,228,230,0.26);"></div>
<div class="a" style="left:802px;top:702px;width:5px;height:5px;background:rgba(190,228,230,0.28);"></div>
<div class="a" style="left:802px;top:707px;width:5px;height:5px;background:rgba(190,228,230,0.4);"></div>
<div class="a" style="left:807px;top:702px;width:5px;height:5px;background:rgba(190,228,230,0.32);"></div>
<div class="a" style="left:807px;top:707px;width:5px;height:5px;background:rgba(190,228,230,0.3);"></div>
<div class="a" style="left:812px;top:702px;width:5px;height:5px;background:rgba(190,228,230,0.5);"></div>
<div class="a" style="left:812px;top:707px;width:5px;height:5px;background:rgba(190,228,230,0.2);"></div>
<div class="a" style="left:817px;top:702px;width:5px;height:5px;background:rgba(190,228,230,0.34);"></div>
<div class="a" style="left:817px;top:707px;width:5px;height:5px;background:rgba(190,228,230,0.5);"></div>
<div class="a" style="left:822px;top:702px;width:5px;height:5px;background:rgba(190,228,230,0.28);"></div>
<div class="a" style="left:822px;top:707px;width:5px;height:5px;background:rgba(190,228,230,0.3);"></div>
<div class="a" style="left:1289px;top:705px;width:2px;height:2px;background:#cfdede;"></div>
<div class="a" style="left:1285px;top:709px;width:2px;height:2px;background:#cfdede;"></div>
<div class="a" style="left:1289px;top:709px;width:2px;height:2px;background:#cfdede;"></div>
<div class="a" style="left:1281px;top:713px;width:2px;height:2px;background:#cfdede;"></div>
<div class="a" style="left:1285px;top:713px;width:2px;height:2px;background:#cfdede;"></div>
<div class="a" style="left:1289px;top:713px;width:2px;height:2px;background:#cfdede;"></div>
</body></html>
